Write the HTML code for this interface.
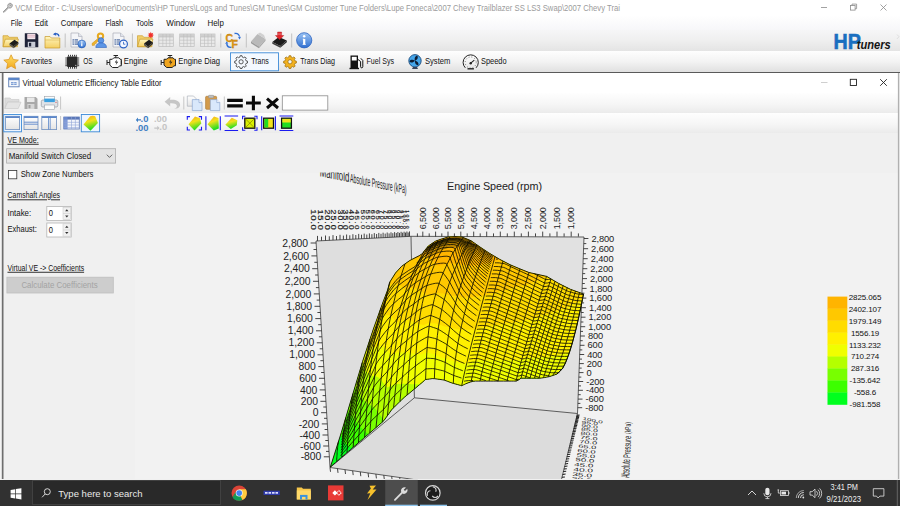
<!DOCTYPE html>
<html><head><meta charset="utf-8"><title>VCM Editor</title>
<style>
*{box-sizing:border-box;margin:0;padding:0}
html,body{width:900px;height:506px;overflow:hidden;background:#f0f0f0;font-family:"Liberation Sans",sans-serif;}
.abs{position:absolute}
#root{position:relative;width:900px;height:506px;overflow:hidden;background:#f0f0f0}
#titlebar{left:0;top:0;width:900px;height:15px;background:#fff}
#titlebar .t{left:15px;top:2px;font-size:8.3px;color:#9a9a9a;white-space:nowrap;letter-spacing:-0.08px}
#menubar{left:0;top:15px;width:900px;height:15px;background:linear-gradient(#ffffff,#f7f7f9)}
#menubar span{position:absolute;top:3px;font-size:8.4px;color:#111;white-space:nowrap}
#tb1{left:0;top:30px;width:900px;height:20.5px;background:linear-gradient(#f6f6f7,#efefef 50%,#e4e4e4)}
#tb2{left:0;top:50.5px;width:900px;height:21px;background:linear-gradient(#fefefe,#f3f3f3 50%,#e0e0e0)}
#tb2 span{position:absolute;top:6px;font-size:8.2px;color:#111;white-space:nowrap}
.sep{position:absolute;width:1px;background:#c3c3c3}
#mdiline{left:0;top:71.5px;width:900px;height:1.5px;background:#5a5a5a}
#child{left:0;top:73px;width:898px;height:407px;background:#f0f0f0;border-left:2px solid #f4f4f4}
#ctitle{left:0;top:0;width:896px;height:20px;background:#fff}

#ctb1{left:0;top:20px;width:896px;height:20px;background:linear-gradient(#fefefe,#f6f6f6 55%,#ebebeb)}
#ctb2{left:0;top:40px;width:896px;height:19.5px;background:linear-gradient(#fefefe,#f6f6f6 55%,#ebebeb)}
.lbl{position:absolute;font-size:7.9px;color:#111;white-space:nowrap}
.u{text-decoration:underline}
#taskbar{left:0;top:479.6px;width:900px;height:27px;background:#313131}
#search{left:32px;top:0.6px;width:189px;height:25px;background:#292929;border:0.7px solid #414141}
#search .t{left:26px;top:8px;font-size:9.6px;color:#e6e6e6;white-space:nowrap}
svg{position:absolute;overflow:visible}
</style></head><body>
<div id="root">
<!--TITLEBAR-->
<div id="titlebar" class="abs">
<svg style="left:2px;top:2px" width="11" height="11" viewBox="0 0 11 11"><path d="M1.2 9.8 L6 5 A2.6 2.6 0 0 1 9.2 1.4 L7.6 3 L8.4 3.8 L10 2.2 A2.6 2.6 0 0 1 6.6 5.8 L2 10.4 Z" fill="#d0d0d0" stroke="#7d7d7d" stroke-width="0.7"/></svg>

<svg style="left:815px;top:0" width="85" height="15" viewBox="0 0 85 15"><g stroke="#8a8a8a" stroke-width="0.8" fill="none"><path d="M6 7.5h6"/><rect x="35.5" y="5.5" width="4.6" height="4.6"/><path d="M37 5.5v-1.4h4.6v4.6h-1.5"/><path d="M65.500 4.500l6 6M71.500 4.500l-6 6"/></g></svg>
</div>
<!--MENUBAR-->
<div id="menubar" class="abs"></div>
<!--TB1-->
<div id="tb1" class="abs"><svg style="left:0;top:0" width="900" height="21" viewBox="0 30 900 21">
<defs>
<linearGradient id="gfold" x1="0" y1="0" x2="0" y2="1"><stop offset="0" stop-color="#fff6c0"/><stop offset="1" stop-color="#f4cf62"/></linearGradient>
<linearGradient id="ginfo" x1="0" y1="0" x2="0" y2="1"><stop offset="0" stop-color="#9cc4f4"/><stop offset="1" stop-color="#2f6fd0"/></linearGradient>
<g id="folder"><path d="M0.5 3.5h5l1.3 1.6h8.2v9.4h-14.5z" fill="#f0cf6a" stroke="#cfa236" stroke-width="0.7"/><path d="M0.5 14.5l2.3-7.5h13.2l-2.5 7.5z" fill="url(#gfold)" stroke="#c79a2b" stroke-width="0.7"/></g>
<g id="eraser"><path d="M0 4.2l5-3.7l4 2.6l-5 4.2z" fill="#1c1c1c"/><path d="M0 4.2l4 3.1v1.7l-4-3.1z" fill="#555"/><path d="M4 7.3l5-4.2v1.7l-5 4.2z" fill="#333"/></g>
<g id="doc"><path d="M1.5 0.5h7.5l3.5 3.5v10.5h-11z" fill="#f4f5f8" stroke="#a9adb8" stroke-width="0.7"/><path d="M9 0.5v3.5h3.5" fill="#dfe2ea" stroke="#a9adb8" stroke-width="0.6"/><rect x="3" y="6.5" width="5.5" height="6" fill="#7f93b8"/><path d="M3 8.5h5.5M3 10.5h5.5M5 6.5v6" stroke="#e8ecf4" stroke-width="0.6"/></g>
<g id="grid"><rect x="0.5" y="1.5" width="14.5" height="12.5" fill="#e9e9e9" stroke="#bdbdbd" stroke-width="0.7"/><rect x="0.5" y="1.5" width="14.5" height="3" fill="#cfcfcf"/><path d="M0.5 4.5h14.5M0.5 7.7h14.5M0.5 10.9h14.5M4.5 1.5v12.5M8 1.5v12.5M11.5 1.5v12.5" stroke="#bdbdbd" stroke-width="0.6" fill="none"/></g>
</defs>
<!-- separators -->
<g stroke="#c2c2c2" stroke-width="1"><path d="M65.2 33.5v14M132.4 33.5v14M220.8 33.5v14M246.3 33.5v14M291.7 33.5v14"/></g>
<!-- open folder + eraser -->
<use href="#folder" transform="translate(2.5 32.2)"/><use href="#eraser" transform="translate(9.5 39.3)"/>
<!-- floppy -->
<g transform="translate(24.8 33.2)"><path d="M0 0h11.8l1.7 1.7v12.3h-13.5z" fill="#1f2338"/><rect x="2.5" y="0.6" width="8" height="5.4" fill="#f3e9ee"/><rect x="2.5" y="1.6" width="8" height="0.8" fill="#d9a9b8"/><rect x="2.5" y="3.4" width="8" height="0.8" fill="#d9a9b8"/><rect x="3" y="8.6" width="7.5" height="5.4" fill="#c9ccd6"/><rect x="4.2" y="9.6" width="2.2" height="3.6" fill="#1f2338"/></g>
<!-- folder with up arrow -->
<g transform="translate(44.5 33.5)"><path d="M0.5 3h5l1.3 1.5h8.5v10h-14.8z" fill="url(#gfold)" stroke="#c79a2b" stroke-width="0.7"/><path d="M0.5 6.5h14.8" stroke="#d9b24a" stroke-width="0.6"/><path d="M14.5 2.8c-0.5-2.5-3-3-4.5-2.3" fill="none" stroke="#2d62c4" stroke-width="1.4"/><path d="M8.3 0.8l3-1.8l0.4 3.2z" fill="#2d62c4"/></g>
<!-- doc info -->
<use href="#doc" transform="translate(69.5 32.5)"/><circle cx="81.8" cy="44" r="3.9" fill="url(#ginfo)" stroke="#1f55b0" stroke-width="0.6"/><path d="M81.8 43.3v2.9" stroke="#fff" stroke-width="1.3"/><circle cx="81.8" cy="41.9" r="0.75" fill="#fff"/>
<!-- key + user -->
<g transform="translate(91 32.5)"><circle cx="9.5" cy="3.6" r="2.7" fill="none" stroke="#e8a91c" stroke-width="2"/><path d="M7.5 5.5l-6.5 5.5l0.3 2l2.2-0.3l0.2-1.6l1.6-0.2l0.2-1.6l1.5-0.3l2-1.8z" fill="#f0b429" stroke="#c98a10" stroke-width="0.5"/><circle cx="10" cy="8" r="2.8" fill="#5b95e6" stroke="#2c62bd" stroke-width="0.6"/><path d="M4.8 15c0-3.2 2.2-4.6 5.2-4.6s5.5 1.4 5.5 4.6z" fill="#5b95e6" stroke="#2c62bd" stroke-width="0.6"/></g>
<!-- doc clock -->
<use href="#doc" transform="translate(111.5 32.5)"/><circle cx="123.5" cy="44" r="3.9" fill="#f4f7ff" stroke="#2d62c4" stroke-width="1.2"/><path d="M123.5 41.8v2.4h1.8" stroke="#2d62c4" stroke-width="0.8" fill="none"/>
<!-- folder star eraser -->
<use href="#folder" transform="translate(137 32.2)"/><use href="#eraser" transform="translate(144 39.3)"/><path d="M150.8 31.8l0.7 1.6l1.7-0.7l-0.7 1.7l1.6 0.7l-1.6 0.7l0.7 1.7l-1.7-0.7l-0.7 1.6l-0.7-1.6l-1.7 0.7l0.7-1.7l-1.6-0.7l1.6-0.7l-0.7-1.7l1.7 0.7z" fill="#f0302a"/>
<!-- grids -->
<use href="#grid" transform="translate(158.3 32.5)"/><use href="#grid" transform="translate(179.2 32.5)"/><use href="#grid" transform="translate(200 32.5)"/>
<!-- CF -->
<g font-family="Liberation Sans, sans-serif" font-weight="700" fill="#e39a17" stroke="#b87608" stroke-width="0.3"><text x="225.5" y="41.5" font-size="10.5">C</text><text x="231.5" y="47.8" font-size="10.5">F</text></g>
<path d="M234.5 33.5c2.5-0.5 4.5 1 5 3.2" fill="none" stroke="#2f6fd6" stroke-width="1.3"/><path d="M238 37.3l1.7 2.3l1.3-2.8z" fill="#2f6fd6"/><path d="M231.5 47.2c-2.5 0.5-4.3-1-4.8-3.2" fill="none" stroke="#2f6fd6" stroke-width="1.3"/><path d="M228.3 43.5l-1.7-2.3l-1.3 2.8z" fill="#2f6fd6"/>
<!-- gray chip -->
<g transform="translate(251 33)"><path d="M0 8.5l6.5-7.5l8 5l-6.5 7.5z" fill="#b9b9b9"/><path d="M0 8.5l8 5v1.8l-8-5z" fill="#9a9a9a"/><path d="M8 13.5l6.5-7.5v1.8l-6.5 7.5z" fill="#a8a8a8"/><path d="M6.5 1l2.5-1.5l4 2.5l1.5 4z" fill="#d0d0d0"/></g>
<!-- black chip red arrow -->
<g transform="translate(272.3 33)"><path d="M0 9l6.5-5l8 3.5l-6.5 5.5z" fill="#1a1a1a"/><path d="M0 9l8 4v1.8l-8-4z" fill="#3c3c3c"/><path d="M8 13l6.5-5.5v1.8l-6.5 5.5z" fill="#2a2a2a"/><path d="M5.3 -1h4v3.5h2.2l-4.2 4.3l-4.2-4.3h2.2z" fill="#e0262b" stroke="#a51217" stroke-width="0.4"/><path d="M5.3 0.3h4M5.3 1.5h4" stroke="#f7a0a0" stroke-width="0.4"/></g>
<!-- info -->
<circle cx="304.2" cy="40.3" r="7.6" fill="url(#ginfo)" stroke="#2a62c0" stroke-width="0.8"/><path d="M304.2 39v5.2" stroke="#fff" stroke-width="2.2"/><circle cx="304.2" cy="36.2" r="1.25" fill="#fff"/><path d="M302.8 39.2h1.4M302.6 44.4h3.2" stroke="#fff" stroke-width="0.9"/>
<!-- HP tuners logo -->
<g font-family="Liberation Sans, sans-serif" font-weight="700"><text x="833.6" y="48.7" font-size="21.9" fill="#1a6fc0" stroke="#1a6fc0" stroke-width="0.6" textLength="27.3" lengthAdjust="spacingAndGlyphs">HP</text><text x="856.8" y="48.7" font-size="13.7" font-style="italic" fill="#141414" textLength="34" lengthAdjust="spacingAndGlyphs">tuners</text></g>
<path d="M897 34.5l2 2.2l-2 2.2" fill="none" stroke="#c9c9c9" stroke-width="0.5"/>
</svg>
</div>
<!--TB2-->
<div id="tb2" class="abs"><svg style="left:0;top:0" width="900" height="21" viewBox="0 50.5 900 21">
<defs><linearGradient id="gstar" x1="0" y1="0" x2="0" y2="1"><stop offset="0" stop-color="#ffe066"/><stop offset="1" stop-color="#f2a81d"/></linearGradient></defs>
<!-- star -->
<path d="M11.1 54.3l2.2 4.7l5.1 0.6l-3.8 3.5l1 5.1l-4.5-2.6l-4.5 2.6l1-5.1l-3.8-3.5l5.1-0.6z" fill="url(#gstar)" stroke="#d9901a" stroke-width="0.7" stroke-linejoin="round"/>
<!-- OS chip -->
<g><rect x="67" y="56" width="10.5" height="10.5" rx="1" fill="#2a2a2a"/><path d="M68.5 54.3v1.7M70.5 54.3v1.7M72.5 54.3v1.7M74.5 54.3v1.7M76.3 54.3v1.7M68.5 66.5v1.7M70.5 66.5v1.7M72.5 66.5v1.7M74.5 66.5v1.7M76.3 66.5v1.7M65.3 57.5h1.7M65.3 59.5h1.7M65.3 61.5h1.7M65.3 63.5h1.7M65.3 65.2h1.7M77.5 57.5h1.7M77.5 59.5h1.7M77.5 61.5h1.7M77.5 63.5h1.7M77.5 65.2h1.7" stroke="#2a2a2a" stroke-width="0.9"/><circle cx="75.8" cy="64.8" r="0.6" fill="#ddd"/></g>
<!-- engine outline -->
<g id="eng" fill="#fff" stroke="#222" stroke-width="1"><path d="M109.8 58.8h2.5l1.5-1.5h5l1.3 1.5h1.2v6.5h-1.7l-1.5 1.7h-5.6l-2.7-2.4z"/><path d="M113.5 55h4.5M115.8 55v2.3M107 59.5v5M107 62h2.8M121.3 60v4" fill="none"/><path d="M116.8 59l-2 3h1.8l-1 2.8l2.6-3.6h-1.8z" fill="#222" stroke="none"/></g>
<!-- engine diag (amber) -->
<g fill="#f0a51e" stroke="#222" stroke-width="1"><path d="M164 58.8h2.5l1.5-1.5h5l1.3 1.5h1.2v6.5h-1.7l-1.5 1.7h-5.6l-2.7-2.4z"/><path d="M167.7 55h4.5M170 55v2.3M161.2 59.5v5M161.2 62h2.8M175.5 60v4" fill="none"/><path d="M171 59l-2 3h1.8l-1 2.8l2.6-3.6h-1.8z" fill="#222" stroke="none"/></g>
<!-- Trans selected box -->
<rect x="230.5" y="52.3" width="48" height="18" fill="#f4f9ff" stroke="#3c8ad8" stroke-width="0.9"/>
<!-- gear outline -->
<g id="gearo" fill="none" stroke="#333" stroke-width="0.8"><circle cx="241.1" cy="61.3" r="2.1"/><path d="M240.2 55.2h1.8l0.4 1.5l1.3 0.5l1.3-0.8l1.3 1.3l-0.8 1.3l0.5 1.3l1.5 0.4v1.8l-1.5 0.4l-0.5 1.3l0.8 1.3l-1.3 1.3l-1.3-0.8l-1.3 0.5l-0.4 1.5h-1.8l-0.4-1.5l-1.3-0.5l-1.3 0.8l-1.3-1.3l0.8-1.3l-0.5-1.3l-1.5-0.4v-1.8l1.5-0.4l0.5-1.3l-0.8-1.3l1.3-1.3l1.3 0.8l1.3-0.5z"/></g>
<!-- gold gear -->
<g transform="translate(48.9 0)" fill="#f2b11f" stroke="#9a6a08" stroke-width="0.7" fill-rule="evenodd"><path d="M240.2 55.2h1.8l0.4 1.5l1.3 0.5l1.3-0.8l1.3 1.3l-0.8 1.3l0.5 1.3l1.5 0.4v1.8l-1.5 0.4l-0.5 1.3l0.8 1.3l-1.3 1.3l-1.3-0.8l-1.3 0.5l-0.4 1.5h-1.8l-0.4-1.5l-1.3-0.5l-1.3 0.8l-1.3-1.3l0.8-1.3l-0.5-1.3l-1.5-0.4v-1.8l1.5-0.4l0.5-1.3l-0.8-1.3l1.3-1.3l1.3 0.8l1.3-0.5z M243.2 61.3a2.1 2.1 0 1 0 -4.2 0a2.1 2.1 0 1 0 4.2 0z"/></g>
<!-- fuel pump -->
<g><path d="M350.5 55h7.5v12.5h-7.5z" fill="#111"/><rect x="351.8" y="56.3" width="4.9" height="3.7" fill="#fff"/><path d="M349.5 68h9.5" stroke="#111" stroke-width="1.4"/><path d="M358 59l2.6 2v5.2a1.1 1.1 0 0 0 2.2 0v-6.2l-2-2.2" fill="none" stroke="#111" stroke-width="1"/></g>
<!-- system fan -->
<g><circle cx="415" cy="60.3" r="6.2" fill="#45a6ea" stroke="#1f4c7a" stroke-width="0.9"/><path d="M415 60.3c-1-3 0.5-5 2.5-5c0.8 2 0 4-2.5 5zM415 60.3c3.1 0.6 4.1 2.9 3.1 4.6c-2.1-0.3-3.4-2-3.1-4.6zM415 60.3c-2.1 2.4-4.6 2.1-5.6 0.4c1.3-1.7 3.4-2 5.6-0.4z" fill="#0f1d33"/><path d="M412 68.6h6l-1-2h-4z" fill="#39455c"/></g>
<!-- speedo -->
<g fill="none" stroke="#222" stroke-width="1"><path d="M465.300 67.300a7.600 7.600 0 1 1 10.800 0"/><path d="M467.500 68.300h6.400" stroke-width="1.400"/><path d="M470.700 62.600l3.600-3" stroke-width="1.100"/><circle cx="470.700" cy="62" r="5.500" stroke-width="1" stroke-dasharray="0.700 2.200" opacity="0.750"/></g><circle cx="470.700" cy="62.700" r="1.200" fill="#222"/>
</svg>
</div>
<div id="mdiline" class="abs"></div>
<!--CHILD-->
<div id="child" class="abs">
<div id="ctitle" class="abs"></div>
<div id="ctb1" class="abs"></div>
<div id="ctb2" class="abs"></div>
</div>
<svg style="left:0;top:0" width="900" height="140" viewBox="0 0 900 140">
<defs>
<linearGradient id="gsurf" x1="0" y1="0" x2="0.3" y2="1"><stop offset="0" stop-color="#f6a21a"/><stop offset="0.45" stop-color="#f2e21c"/><stop offset="1" stop-color="#22dd22"/></linearGradient>
<linearGradient id="gpaper" x1="0" y1="0" x2="0" y2="1"><stop offset="0" stop-color="#ffffff"/><stop offset="1" stop-color="#e4e4e4"/></linearGradient>
</defs>
<rect x="135" y="173" width="763" height="306" fill="#f2f2f2"/><rect x="898" y="73" width="2" height="406" fill="#e4e4e4"/><path d="M898.4 73v406" stroke="#9c9c9c" stroke-width="0.8"/>
<!-- child left dark border -->
<rect x="1.8" y="73" width="1.7" height="406" fill="#6e6e6e"/>
<!-- title icon -->
<g><rect x="8.7" y="78" width="10.4" height="8.8" fill="#f4f7fc" stroke="#5f7fb5" stroke-width="0.9"/><rect x="8.7" y="78" width="10.4" height="2.2" fill="#5b86c9"/><rect x="11" y="82" width="5.6" height="3" fill="#7fa0d6"/><path d="M11 83.5h5.6M13.8 82v3" stroke="#fff" stroke-width="0.5"/></g>
<!-- child window buttons -->
<g fill="none"><path d="M821 82.5h6.5" stroke="#c9c9c9" stroke-width="0.9"/><rect x="850.3" y="79.3" width="6.2" height="6.2" stroke="#222" stroke-width="0.9"/><path d="M880.2 79.2l6.6 6.6M886.8 79.2l-6.6 6.6" stroke="#222" stroke-width="0.9"/></g>
<!-- row 1 -->
<g opacity="0.9"><path d="M4.9 98h5.2l1.3 1.5h7.6v2.5h-11.5l-2.6 6.5z" fill="#dadada" stroke="#c3c3c3" stroke-width="0.6"/><path d="M4.9 108.5l2.8-6.3h13.3l-2.8 6.3z" fill="#e3e3e3" stroke="#c3c3c3" stroke-width="0.6"/></g>
<g><path d="M24.5 97h11.2l1.8 1.8v10.2h-13z" fill="#a9a9a9"/><rect x="27" y="97.5" width="7.5" height="4.5" fill="#e9e9e9"/><rect x="27.4" y="104" width="7" height="5" fill="#d6d6d6"/><rect x="28.5" y="105" width="2" height="3.3" fill="#a0a0a0"/></g>
<g><rect x="44.5" y="96.5" width="10" height="4.5" fill="#fbfbfb" stroke="#9aa0a8" stroke-width="0.6"/><rect x="41.3" y="100" width="16.5" height="7" rx="1.5" fill="#dfe3e8" stroke="#8f979f" stroke-width="0.7"/><rect x="44.3" y="98.6" width="10.5" height="3.5" fill="#3aa0e0"/><rect x="44.5" y="105" width="10" height="4.5" fill="#fdfdfd" stroke="#9aa0a8" stroke-width="0.6"/><circle cx="56" cy="102.2" r="0.55" fill="#d83030"/></g>
<path d="M60.6 96.5v13M183.8 96.5v13M224.3 96.5v13" stroke="#c6c6c6" stroke-width="1"/>
<!-- undo -->
<path d="M164.6 101.8l5.6-4.8v2.9c5.2-0.6 9.6 1.2 9.9 4.6c0.2 2.600-2.400 4.300-5.900 4.500c2.200-1 3-2.400 2.600-3.600c-0.500-1.600-3.100-2.400-6.600-2.200v3.400z" fill="#c6c6c6"/>
<!-- copy -->
<g stroke="#a3a9b3" stroke-width="0.6"><path d="M187.3 96h6.2l2.5 2.5v7.7h-8.7z" fill="url(#gpaper)"/><path d="M192.3 99.6h6.7l3 3v8h-9.7z" fill="#d9e8fb" stroke="#7f9cc9"/><path d="M199 99.6v3h3" fill="#f4f8ff" stroke="#7f9cc9"/></g>
<!-- paste -->
<g><rect x="205.6" y="96.3" width="11" height="13" rx="1" fill="#d39b4c" stroke="#a8742b" stroke-width="0.6"/><rect x="208.5" y="95.3" width="5.2" height="2.6" rx="0.7" fill="#bfbfbf" stroke="#8a8a8a" stroke-width="0.5"/><path d="M210.3 99.6h6.5l3 3v8h-9.5z" fill="#d9e8fb" stroke="#7f9cc9" stroke-width="0.6"/><path d="M216.8 99.6v3h3" fill="#f4f8ff" stroke="#7f9cc9" stroke-width="0.6"/></g>
<!-- = + x -->
<g stroke="#0a0a0a" fill="none"><path d="M227.2 100.3h15.6M227.2 105.8h15.6" stroke-width="3.2"/><path d="M246 103h14.8M253.4 95.8v14.4" stroke-width="3.1"/><path d="M267 98.6l11 9.4M278 98.6l-11 9.4" stroke-width="3"/></g>
<rect x="282.3" y="95.8" width="45.5" height="14.3" fill="#fff" stroke="#8c8c8c" stroke-width="0.8"/>
<!-- row 2 : layout icons -->
<rect x="3.7" y="114.5" width="17.8" height="17.3" fill="#eef6ff" stroke="#3c8ad8" stroke-width="0.9"/>
<g fill="url(#gpaper)" stroke="#6f8fbf" stroke-width="0.8"><rect x="5.6" y="116.3" width="14" height="13.3"/><rect x="24" y="116.3" width="14" height="13.3"/><rect x="41.8" y="116.3" width="14.8" height="13.3"/></g>
<g stroke="#5b86c9" fill="none"><path d="M5.6 117.2h14M24 117.2h14M41.8 117.2h14.8" stroke-width="1.8"/><path d="M24 122.2h14M24 124.2h14" stroke-width="0.9"/><path d="M48.5 116.3v13.3M50.2 116.3v13.3" stroke-width="0.8"/></g>
<path d="M60.6 116v14" stroke="#c6c6c6" stroke-width="1"/>
<!-- table icon -->
<g><rect x="63.8" y="117" width="15.5" height="12" fill="#f4f6fb" stroke="#5b78b8" stroke-width="0.8"/><rect x="63.8" y="117" width="15.5" height="2.6" fill="#5b78b8"/><rect x="63.8" y="117" width="3.8" height="12" fill="#6c8bd0" opacity="0.85"/><path d="M63.8 122.3h15.5M63.8 125h15.5M63.8 127.6h15.5M71.5 117v12M75.4 117v12" stroke="#8ea4d6" stroke-width="0.6"/></g>
<!-- surface icon selected -->
<rect x="81.3" y="114.5" width="18.3" height="17.3" fill="#eef6ff" stroke="#3c8ad8" stroke-width="0.9"/>
<path d="M83.5 124.5l6.7-8.2c1.5-0.9 4-0.7 5 0l2.7 6.6l-7.4 7.8z" fill="url(#gsurf)"/>
<!-- decimal icons -->
<g font-family="Liberation Sans, sans-serif" font-weight="700" font-size="9.4"><text x="140.6" y="122.3" fill="#3f7fc4">.0</text><text x="135.4" y="130.8" fill="#3f7fc4">.00</text><text x="154" y="122" fill="#c4c4c4">.00</text><text x="159.3" y="130.3" fill="#c4c4c4">.0</text></g>
<path d="M141 119.2h-3v-1.6l-2.2 2.3l2.2 2.3v-1.6h3z" fill="#3f7fc4"/><path d="M154.3 127.4h3v-1.6l2.2 2.3l-2.2 2.3v-1.6h-3z" fill="#c4c4c4"/>
<!-- view icons -->
<g id="vi">
<path d="M188.5 124.3l6.5-7.8l5 1.8l1.3 5.3l-6.8 7z" fill="url(#gsurf)"/><path d="M187.3 119.8v-3.2h2.7M198.8 116.6h2.7v3.2M201.5 126.8v3.2h-2.7M190 130h-2.7v-3.2" fill="none" stroke="#1a1af0" stroke-width="1.1"/>
<path d="M207.5 124.3l6.5-7.8l4.5 1.6l0.3 10.5l-5 2z" fill="url(#gsurf)"/><path d="M205.9 116.3v14M220.3 116.3v14" stroke="#1a1af0" stroke-width="1.1"/>
<path d="M225.3 124.8l6.5-7l5.5 2.5l-0.5 5l-6 3.8z" fill="url(#gsurf)"/><path d="M224.6 116h13.5M224.6 130.5h13.5" stroke="#1a1af0" stroke-width="1.1"/>
<rect x="244.8" y="118.2" width="10" height="10" fill="#d8f000" stroke="#111" stroke-width="1.3"/><path d="M244.8 118.2l10 10M254.8 118.2l-10 10" stroke="#7a6a00" stroke-width="0.6"/><path d="M242.6 119.3v-3h2.7M254.3 116.3h2.7v3M257 127.3v3h-2.7M245.3 130.3h-2.7v-3" fill="none" stroke="#1a1af0" stroke-width="1.1"/>
<rect x="263.7" y="118.2" width="9.8" height="10" fill="#f2e21c" stroke="#111" stroke-width="1.3"/><rect x="264.4" y="118.9" width="3.8" height="8.6" fill="#22dd22"/><path d="M261.7 116.3v14M275.4 116.3v14" stroke="#1a1af0" stroke-width="1.1"/>
<rect x="281.6" y="118.2" width="9.8" height="10" fill="#22dd22" stroke="#111" stroke-width="1.3"/><rect x="282.3" y="118.9" width="8.4" height="3.6" fill="#f2e21c"/><path d="M279.5 116h13.8M279.5 130.5h13.8" stroke="#1a1af0" stroke-width="1.1"/>
</g>
</svg>

<svg style="left:0;top:0" width="262" height="479" viewBox="0 0 262 479">
<rect x="6.6" y="148.7" width="109" height="14.4" fill="#e3e3e3" stroke="#adadad" stroke-width="0.8"/>
<path d="M106.8 154.7l2.7 2.7l2.7-2.7" fill="none" stroke="#444" stroke-width="0.8"/>
<rect x="8.5" y="170.5" width="8.3" height="8.3" fill="#fff" stroke="#333" stroke-width="0.8"/>
<g><rect x="46.8" y="206.5" width="24.4" height="14" fill="#fff" stroke="#b5b5b5" stroke-width="0.8"/><rect x="63" y="207.3" width="7.6" height="12.4" fill="#f0f0f0" stroke="#c8c8c8" stroke-width="0.5"/><path d="M65.1 211.3l1.7-2l1.7 2zM65.1 215.6l1.7 2l1.7-2z" fill="#333"/><path d="M63 213.5h7.6" stroke="#c8c8c8" stroke-width="0.5"/></g>
<g transform="translate(0 16.5)"><rect x="46.8" y="206.5" width="24.4" height="14" fill="#fff" stroke="#b5b5b5" stroke-width="0.8"/><rect x="63" y="207.3" width="7.6" height="12.4" fill="#f0f0f0" stroke="#c8c8c8" stroke-width="0.5"/><path d="M65.1 211.3l1.7-2l1.7 2zM65.1 215.6l1.7 2l1.7-2z" fill="#333"/><path d="M63 213.5h7.6" stroke="#c8c8c8" stroke-width="0.5"/></g>
<rect x="6.9" y="277.2" width="106.4" height="15.8" fill="#cdcdcd" stroke="#bfbfbf" stroke-width="0.8"/>
</svg>

<svg style="left:0;top:0" width="900" height="479" viewBox="0 0 900 479"><g font-family="Liberation Sans, sans-serif">
<text x="15.2" y="10.8" font-size="8.6" fill="#9b9b9b" textLength="604.8" lengthAdjust="spacingAndGlyphs" >VCM Editor - C:\Users\owner\Documents\HP Tuners\Logs and Tunes\GM Tunes\GM Customer Tune Folders\Lupe Foneca\2007 Chevy Trailblazer SS LS3 Swap\2007 Chevy Trai</text>
<text x="10.7" y="26.4" font-size="8.9" fill="#111" textLength="11.5" lengthAdjust="spacingAndGlyphs" >File</text>
<text x="34.7" y="26.4" font-size="8.9" fill="#111" textLength="13.3" lengthAdjust="spacingAndGlyphs" >Edit</text>
<text x="60.8" y="26.4" font-size="8.9" fill="#111" textLength="32.0" lengthAdjust="spacingAndGlyphs" >Compare</text>
<text x="105.4" y="26.4" font-size="8.9" fill="#111" textLength="17.6" lengthAdjust="spacingAndGlyphs" >Flash</text>
<text x="136" y="26.4" font-size="8.9" fill="#111" textLength="17.2" lengthAdjust="spacingAndGlyphs" >Tools</text>
<text x="166.3" y="26.4" font-size="8.9" fill="#111" textLength="28.7" lengthAdjust="spacingAndGlyphs" >Window</text>
<text x="207.5" y="26.4" font-size="8.9" fill="#111" textLength="16.3" lengthAdjust="spacingAndGlyphs" >Help</text>
<text x="21.3" y="64.2" font-size="8.7" fill="#111" textLength="30.7" lengthAdjust="spacingAndGlyphs" >Favorites</text>
<text x="83.2" y="64.2" font-size="8.7" fill="#111" textLength="9.4" lengthAdjust="spacingAndGlyphs" >OS</text>
<text x="123.8" y="64.2" font-size="8.7" fill="#111" textLength="23.8" lengthAdjust="spacingAndGlyphs" >Engine</text>
<text x="178.3" y="64.2" font-size="8.7" fill="#111" textLength="41.6" lengthAdjust="spacingAndGlyphs" >Engine Diag</text>
<text x="251.2" y="64.2" font-size="8.7" fill="#111" textLength="17.6" lengthAdjust="spacingAndGlyphs" >Trans</text>
<text x="300.2" y="64.2" font-size="8.7" fill="#111" textLength="34.8" lengthAdjust="spacingAndGlyphs" >Trans Diag</text>
<text x="366.5" y="64.2" font-size="8.7" fill="#111" textLength="27.5" lengthAdjust="spacingAndGlyphs" >Fuel Sys</text>
<text x="425" y="64.2" font-size="8.7" fill="#111" textLength="25.3" lengthAdjust="spacingAndGlyphs" >System</text>
<text x="481" y="64.2" font-size="8.7" fill="#111" textLength="25.5" lengthAdjust="spacingAndGlyphs" >Speedo</text>
<text x="22.4" y="85.8" font-size="8.7" fill="#111" textLength="139.2" lengthAdjust="spacingAndGlyphs" >Virtual Volumetric Efficiency Table Editor</text>
<text x="7.5" y="142.8" font-size="8.6" fill="#111" textLength="31.2" lengthAdjust="spacingAndGlyphs" text-decoration="underline">VE Mode:</text>
<text x="8.7" y="158.8" font-size="8.6" fill="#111" textLength="82.5" lengthAdjust="spacingAndGlyphs" >Manifold Switch Closed</text>
<text x="20.7" y="177.4" font-size="8.6" fill="#111" textLength="72.8" lengthAdjust="spacingAndGlyphs" >Show Zone Numbers</text>
<text x="7.5" y="198.4" font-size="8.6" fill="#111" textLength="52.5" lengthAdjust="spacingAndGlyphs" text-decoration="underline">Camshaft Angles</text>
<text x="7.5" y="215.8" font-size="8.6" fill="#111" textLength="23.7" lengthAdjust="spacingAndGlyphs" >Intake:</text>
<text x="7.5" y="232.3" font-size="8.6" fill="#111" textLength="29.3" lengthAdjust="spacingAndGlyphs" >Exhaust:</text>
<text x="48.8" y="216.1" font-size="8.6" fill="#111" textLength="4.2" lengthAdjust="spacingAndGlyphs" >0</text>
<text x="48.8" y="232.6" font-size="8.6" fill="#111" textLength="4.2" lengthAdjust="spacingAndGlyphs" >0</text>
<text x="7.5" y="270.8" font-size="8.6" fill="#111" textLength="76.6" lengthAdjust="spacingAndGlyphs" text-decoration="underline">Virtual VE -&gt; Coefficients</text>
<text x="21.4" y="288.0" font-size="8.6" fill="#a3a3a3" textLength="76.2" lengthAdjust="spacingAndGlyphs" >Calculate Coefficients</text>
</g></svg>
<svg style="left:0;top:0" width="900" height="506" viewBox="0 0 900 506">
<defs><clipPath id="cpp"><rect x="262" y="133" width="636" height="346"/></clipPath></defs>
<g clip-path="url(#cpp)">
<polygon points="316,241 411,236.3 414.4,397.8 330,467.5" fill="#dedede"/>
<polygon points="411,236.3 584,237 577.5,413.5 414.4,397.8" fill="#e1e1e1"/>
<polygon points="330,467.5 414.4,397.8 577.5,413.5 556.5,500" fill="#dcdcdc"/>
<g fill="none" stroke="#3a3a3a" stroke-width="0.8">
<polyline points="316,241 411,236.3 584,237"/>
<polyline points="316,241 330,467.5"/>
<polyline points="411,236.3 414.4,397.8"/>
<polyline points="584,237 577.5,413.5"/>
<polyline points="330,467.5 414.4,397.8 577.5,413.5"/>
<polyline points="330,467.5 556.5,500 577.5,413.5"/>
</g>
<polygon points="330.4,467 332.9,464.8 335.5,462.6 336.6,461.6 338,460.4 340.6,458.2 341.8,457.1 343.1,456 345.7,453.8 347,452.6 348.2,451.6 350.8,449.4 353.2,447.3 353.3,447.2 355.9,445 358.4,442.8 358.4,442.8 361,440.6 363.5,438.4 364.6,437.4 366,436.2 368.6,434 369.8,432.9 371.1,431.8 373.7,429.6 376,427.6 376.2,427.4 378.8,425.2 381.3,423 382.2,422.2 383.9,420.6 386.4,417.1 387.4,415.7 389,413.5 391.5,409.9 393.6,407.7 394.1,407.3 396.6,404.8 399.1,402.3 399.9,401.5 401.7,399.8 404.2,397.4 406.8,395.3 407.1,395 409.3,393.2 411.9,391.1 414.4,389 414.4,389 417,386.8 419.5,384.7 422.1,382.5 424.6,380.3 425.6,379.5 427.2,379.3 429.7,379 432.2,378.6 434.4,378.7 434.8,378.7 437.3,379.1 439.9,379.4 442.4,379.8 444.3,380.1 445,380.4 447.5,381.3 450.1,382.3 452.6,383.2 453.3,383.4 455.2,383.9 457.7,384.6 460.2,385.3 460.4,385.3 461.7,385.7 462.8,385.2 463.4,384.9 464.5,384.4 465.3,384 467.9,382.9 470.4,382.1 471,381.9 473,381.3 475.5,381.1 478.1,381.1 480,381.1 480.6,381.1 483.2,381.1 485.7,381.1 488.3,381.1 489,381.1 490.8,381.1 493.3,381.1 495.9,381.1 498,381.1 498.4,381.1 501,381.1 503.5,381.1 506.1,381.1 507,381.1 508.6,381.1 511.2,381.1 513.7,381.1 516,381.1 516.3,381.1 518.8,379.8 521,378.2 521.4,378.2 523.9,378.2 525.5,378.2 526.4,378.2 529,378.2 530,378.2 531.5,378.2 534.1,378.2 534.5,378.2 536.6,378.2 539,378.2 539.2,378.2 541.7,378 543.5,377.7 544.3,377.6 546.8,377.1 548,376.9 549.4,376.6 551.9,375.8 552.5,375.6 554.5,374.9 557,374 557,374 563.6,366.7 566.9,359.5 569.5,352.2 571.7,344.9 573.8,337.6 575.6,330.4 577.4,323.1 579,315.8 580.6,308.5 582.1,301.3 583.5,294 583.5,294 570.4,289.3 558.6,283.4 546.7,276.4 529,272.5 519,268.5 510,264.7 499.6,259.3 489,253 480,247 471,240.7 462,237 455,236.5 448,237 440,239.5 435.8,241 428.7,245.7 425,250 422.5,253.5 419.2,255.7 409.8,260.5 401.5,266.4 395.5,273 389.6,282.4 387.6,290 382.3,304 373.4,329 362.7,361.2 352,396.8 341.4,432.3 330.7,466" fill="#00ff1e"/>
<polygon points="330.4,467 333.9,455.9 337.1,445.8 338.5,441.4 340.5,435.1 342,438.6 342.9,440.9 344,442.6 346.2,444.7 347.4,445.5 348.5,446.3 350.9,447.7 353.2,447.3 353.3,447.2 355.9,445 358.4,442.8 358.4,442.8 361,440.6 363.5,438.4 364.6,437.4 366,436.2 368.6,434 369.8,432.9 371.1,431.8 373.7,429.6 376,427.6 376.2,427.4 378.8,425.2 381.3,423 382.2,422.2 383.9,420.6 386.4,417.1 387.4,415.7 389,413.5 391.5,409.9 393.6,407.7 394.1,407.3 396.6,404.8 399.1,402.3 399.9,401.5 401.7,399.8 404.2,397.4 406.8,395.3 407.1,395 409.3,393.2 411.9,391.1 414.4,389 414.4,389 417,386.8 419.5,384.7 422.1,382.5 424.6,380.3 425.6,379.5 427.2,379.3 429.7,379 432.2,378.6 434.4,378.7 434.8,378.7 437.3,379.1 439.9,379.4 442.4,379.8 444.3,380.1 445,380.4 447.5,381.3 450.1,382.3 452.6,383.2 453.3,383.4 455.2,383.9 457.7,384.6 460.2,385.3 460.4,385.3 461.7,385.7 462.8,385.2 463.4,384.9 464.5,384.4 465.3,384 467.9,382.9 470.4,382.1 471,381.9 473,381.3 475.5,381.1 478.1,381.1 480,381.1 480.6,381.1 483.2,381.1 485.7,381.1 488.3,381.1 489,381.1 490.8,381.1 493.3,381.1 495.9,381.1 498,381.1 498.4,381.1 501,381.1 503.5,381.1 506.1,381.1 507,381.1 508.6,381.1 511.2,381.1 513.7,381.1 516,381.1 516.3,381.1 518.8,379.8 521,378.2 521.4,378.2 523.9,378.2 525.5,378.2 526.4,378.2 529,378.2 530,378.2 531.5,378.2 534.1,378.2 534.5,378.2 536.6,378.2 539,378.2 539.2,378.2 541.7,378 543.5,377.7 544.3,377.6 546.8,377.1 548,376.9 549.4,376.6 551.9,375.8 552.5,375.6 554.5,374.9 557,374 557,374 563.6,366.7 566.9,359.5 569.5,352.2 571.7,344.9 573.8,337.6 575.6,330.4 577.4,323.1 579,315.8 580.6,308.5 582.1,301.3 583.5,294 583.5,294 570.4,289.3 558.6,283.4 546.7,276.4 529,272.5 519,268.5 510,264.7 499.6,259.3 489,253 480,247 471,240.7 462,237 455,236.5 448,237 440,239.5 435.8,241 428.7,245.7 425,250 422.5,253.5 419.2,255.7 409.8,260.5 401.5,266.4 395.5,273 389.6,282.4 387.6,290 382.3,304 373.4,329 362.7,361.2 352,396.8 341.4,432.3 330.7,466" fill="#3cff00"/>
<polygon points="330.4,467 333.9,455.9 337.1,445.8 338.5,441.4 340.5,435.1 344.1,423.4 345.8,417.7 347.6,411.5 349,413 349.9,414.3 350.8,415.5 352.9,417.9 355,420.2 355.1,420.3 357.3,423.2 359.6,425.8 359.6,425.9 361.8,428.3 364.1,430.5 365.1,431.4 366.3,432.7 368.6,434 369.8,432.9 371.1,431.8 373.7,429.6 376,427.6 376.2,427.4 378.8,425.2 381.3,423 382.2,422.2 383.9,420.6 386.4,417.1 387.4,415.7 389,413.5 391.5,409.9 393.6,407.7 394.1,407.3 396.6,404.8 399.1,402.3 399.9,401.5 401.7,399.8 404.2,397.4 406.8,395.3 407.1,395 409.3,393.2 411.9,391.1 414.4,389 414.4,389 417,386.8 419.5,384.7 422.1,382.5 424.6,380.3 425.6,379.5 427.2,379.3 429.7,379 432.2,378.6 434.4,378.7 434.8,378.7 437.3,379.1 439.9,379.4 442.4,379.8 444.3,380.1 445,380.4 447.5,381.3 450.1,382.3 452.6,383.2 453.3,383.4 455.2,383.9 457.7,384.6 460.2,385.3 460.4,385.3 461.7,385.7 462.8,385.2 463.4,384.9 464.5,384.4 465.3,384 467.9,382.9 470.4,382.1 471,381.9 473,381.3 475.5,381.1 478.1,381.1 480,381.1 480.6,381.1 483.2,381.1 485.7,381.1 488.3,381.1 489,381.1 490.8,381.1 493.3,381.1 495.9,381.1 498,381.1 498.4,381.1 501,381.1 503.5,381.1 506.1,381.1 507,381.1 508.6,381.1 511.2,381.1 513.7,381.1 516,381.1 516.3,381.1 518.8,379.8 521,378.2 521.4,378.2 523.9,378.2 525.5,378.2 526.4,378.2 529,378.2 530,378.2 531.5,378.2 534.1,378.2 534.5,378.2 536.6,378.2 539,378.2 539.2,378.2 541.7,378 543.5,377.7 544.3,377.6 546.8,377.1 548,376.9 549.4,376.6 551.9,375.8 552.5,375.6 554.5,374.9 557,374 557,374 563.6,366.7 566.9,359.5 569.5,352.2 571.7,344.9 573.8,337.6 575.6,330.4 577.4,323.1 579,315.8 580.6,308.5 582.1,301.3 583.5,294 583.5,294 570.4,289.3 558.6,283.4 546.7,276.4 529,272.5 519,268.5 510,264.7 499.6,259.3 489,253 480,247 471,240.7 462,237 455,236.5 448,237 440,239.5 435.8,241 428.7,245.7 425,250 422.5,253.5 419.2,255.7 409.8,260.5 401.5,266.4 395.5,273 389.6,282.4 387.6,290 382.3,304 373.4,329 362.7,361.2 352,396.8 341.4,432.3 330.7,466" fill="#78ff00"/>
<polygon points="330.4,467 333.9,455.9 337.1,445.8 338.5,441.4 340.5,435.1 344.1,423.4 345.8,417.7 347.6,411.5 351.2,399.6 353,393.5 354.8,387.4 356.3,388.1 357.8,390.9 357.8,391.1 359.7,394.5 361.7,397.6 361.7,397.6 364,400.4 366.3,402.6 367.3,403.3 368.6,404.3 370.9,405.6 372,405.9 373.3,407.1 375.6,409.3 377.6,411.6 377.8,411.9 379.8,414.7 381.9,417.6 382.6,418.6 383.9,420.4 386.4,417.1 387.4,415.7 389,413.5 391.5,409.9 393.6,407.7 394.1,407.3 396.6,404.8 399.1,402.3 399.9,401.5 401.7,399.8 404.2,397.4 406.8,395.3 407.1,395 409.3,393.2 411.9,391.1 414.4,389 414.4,389 417,386.8 419.5,384.7 422.1,382.5 424.6,380.3 425.6,379.5 427.2,379.3 429.7,379 432.2,378.6 434.4,378.7 434.8,378.7 437.3,379.1 439.9,379.4 442.4,379.8 444.3,380.1 445,380.4 447.5,381.3 450.1,382.3 452.6,383.2 453.3,383.4 455.2,383.9 457.7,384.6 460.2,385.3 460.4,385.3 461.7,385.7 462.8,385.2 463.4,384.9 464.5,384.4 465.3,384 467.9,382.9 470.4,382.1 471,381.9 473,381.3 475.5,381.1 478.1,381.1 480,381.1 480.6,381.1 483.2,381.1 485.7,381.1 488.3,381.1 489,381.1 490.8,381.1 493.3,381.1 495.9,381.1 498,381.1 498.4,381.1 501,381.1 503.5,381.1 506.1,381.1 507,381.1 508.6,381.1 511.2,381.1 513.7,381.1 516,381.1 516.3,381.1 518.8,379.8 521,378.2 521.4,378.2 523.9,378.2 525.5,378.2 526.4,378.2 529,378.2 530,378.2 531.5,378.2 534.1,378.2 534.5,378.2 536.6,378.2 539,378.2 539.2,378.2 541.7,378 543.5,377.7 544.3,377.6 546.8,377.1 548,376.9 549.4,376.6 551.9,375.8 552.5,375.6 554.5,374.9 557,374 557,374 563.6,366.7 566.9,359.5 569.5,352.2 571.7,344.9 573.8,337.6 575.6,330.4 577.4,323.1 579,315.8 580.6,308.5 582.1,301.3 583.5,294 583.5,294 570.4,289.3 558.6,283.4 546.7,276.4 529,272.5 519,268.5 510,264.7 499.6,259.3 489,253 480,247 471,240.7 462,237 455,236.5 448,237 440,239.5 435.8,241 428.7,245.7 425,250 422.5,253.5 419.2,255.7 409.8,260.5 401.5,266.4 395.5,273 389.6,282.4 387.6,290 382.3,304 373.4,329 362.7,361.2 352,396.8 341.4,432.3 330.7,466" fill="#b4ff00"/>
<polygon points="330.4,467 333.9,455.9 337.1,445.8 338.5,441.4 340.5,435.1 344.1,423.4 345.8,417.7 347.6,411.5 351.2,399.6 353,393.5 354.8,387.4 358.6,374.8 362.2,362.7 362.4,362.1 363.4,365.8 364.8,369.4 364.8,369.4 366.8,372.4 368.9,374.7 369.9,375.2 371.2,376 373.6,376.1 374.7,375.5 376.2,376.5 378.9,377.8 381,379.8 381.2,380 383.2,382.7 385.2,385.6 385.9,386.2 387.3,387.6 389.5,386.6 390.4,386.1 391.8,385.5 394.1,384.5 396,384.2 396.4,384.2 398.7,384.1 401,383.9 401.7,383.9 403.2,383.8 405.4,383.7 407.6,383.9 407.9,383.9 409.9,384 412.2,384.2 414.6,384.3 414.6,384.3 417.1,384.3 419.5,384.3 422.1,382.5 424.6,380.3 425.6,379.5 427.2,379.3 429.7,379 432.2,378.6 434.4,378.7 434.8,378.7 437.3,379.1 439.9,379.4 442.4,379.8 444.3,380.1 445,380.4 447.5,381.3 450.1,382.3 452.6,383.2 453.3,383.4 455.2,383.9 457.7,384.6 460.2,385.3 460.4,385.3 461.7,385.7 462.8,385.2 463.4,384.9 464.5,384.4 465.3,384 467.9,382.9 470.4,382.1 471,381.9 473,381.3 475.5,381.1 478.1,381.1 480,381.1 480.6,381.1 483.2,381.1 485.7,381.1 488.3,381.1 489,381.1 490.8,381.1 493.3,381.1 495.9,381.1 498,381.1 498.4,381.1 501,381.1 503.5,381.1 506.1,381.1 507,381.1 508.6,381.1 511.2,381.1 513.7,381.1 516,381.1 516.3,381.1 518.8,379.8 521,378.2 521.4,378.2 523.9,378.2 525.5,378.2 526.4,378.2 529,378.2 530,378.2 531.5,378.2 534.1,378.2 534.5,378.2 536.6,378.2 539,378.2 539.2,378.2 541.7,378 543.5,377.7 544.3,377.6 546.8,377.1 548,376.9 549.4,376.6 551.9,375.8 552.5,375.6 554.5,374.9 557,374 557,374 563.6,366.7 566.9,359.5 569.5,352.2 571.7,344.9 573.8,337.6 575.6,330.4 577.4,323.1 579,315.8 580.6,308.5 582.1,301.3 583.5,294 583.5,294 570.4,289.3 558.6,283.4 546.7,276.4 529,272.5 519,268.5 510,264.7 499.6,259.3 489,253 480,247 471,240.7 462,237 455,236.5 448,237 440,239.5 435.8,241 428.7,245.7 425,250 422.5,253.5 419.2,255.7 409.8,260.5 401.5,266.4 395.5,273 389.6,282.4 387.6,290 382.3,304 373.4,329 362.7,361.2 352,396.8 341.4,432.3 330.7,466" fill="#f0ff00"/>
<polygon points="330.4,467 333.9,455.9 337.1,445.8 338.5,441.4 340.5,435.1 344.1,423.4 345.8,417.7 347.6,411.5 351.2,399.6 353,393.5 354.8,387.4 358.6,374.8 362.2,362.7 362.4,362.1 366.2,350.6 369.6,341.1 369.6,341.1 370.8,344.5 372.5,346.8 373.4,347 374.6,347.6 377,346.7 378.2,345 379.7,345.8 382.8,346.3 385.1,347.9 385.3,348.2 387.5,350.7 389.5,353.5 390.2,353.9 391.5,354.8 393.6,353.9 394.5,353.5 395.8,353 398,352.3 399.8,352.2 400.2,352.2 402.4,352.2 404.6,352.3 405.3,352.3 406.5,352.4 408.3,352.6 410.1,352.9 410.4,353 412,353.3 414,353.6 416,354 416.1,354 418.4,354.5 420.9,354.6 423.4,353.7 425.8,352.7 426.8,352.3 428.3,352.7 430.9,353.3 433.4,354 435.5,354.8 435.9,355 438.4,356.3 441,357.6 443.6,358.2 445.6,358.6 446.3,358.9 449,360 451.7,360.8 454.3,361.7 455.1,361.8 457.3,362.3 460.6,362.9 464.3,363.5 464.5,363.5 466.6,363.8 467.7,363.4 468.3,363.1 469.4,362.7 470.3,362.4 472.8,361.5 475.3,360.9 475.9,360.8 477.9,360.3 480.4,360.2 483,360.2 484.9,360.2 485.6,360.2 488.2,360.2 490.8,360.2 493.4,360.2 494.2,360.1 496,360.2 498.6,360.2 501.2,360.3 503.3,360.3 503.8,360.3 506.4,360.3 508.9,360.3 511.5,360.2 512.4,360.2 514.1,360.2 516.7,360.2 519.3,360.1 521.6,360.1 521.8,360.1 524.4,359 526.7,357.7 527,357.7 529.6,357.7 531.2,357.7 532.2,357.7 534.8,357.6 535.8,357.6 537.4,357.5 540,357.4 540.5,357.4 542.7,357.3 545.1,357.1 545.3,357.1 548.2,356.8 550.4,356.5 551.3,356.3 554.4,355.8 555.9,355.5 557.8,355.3 561.5,354.5 562.4,354.3 565.3,353.6 569.3,352.7 569.3,352.7 571,347.3 572.6,342 574,336.7 575.4,331.3 576.7,326 577.9,320.7 579.1,315.3 580.3,310 581.4,304.7 582.5,299.3 583.5,294 583.5,294 570.4,289.3 558.6,283.4 546.7,276.4 529,272.5 519,268.5 510,264.7 499.6,259.3 489,253 480,247 471,240.7 462,237 455,236.5 448,237 440,239.5 435.8,241 428.7,245.7 425,250 422.5,253.5 419.2,255.7 409.8,260.5 401.5,266.4 395.5,273 389.6,282.4 387.6,290 382.3,304 373.4,329 362.7,361.2 352,396.8 341.4,432.3 330.7,466" fill="#fff000"/>
<polygon points="330.4,467 333.9,455.9 337.1,445.8 338.5,441.4 340.5,435.1 344.1,423.4 345.8,417.7 347.6,411.5 351.2,399.6 353,393.5 354.8,387.4 358.6,374.8 362.2,362.7 362.4,362.1 366.2,350.6 370,339.2 370,339.2 374.5,326 377.7,318.9 378.4,318.9 379.4,319.3 381.7,317.2 382.9,314.6 384.5,315.2 388.1,314.9 390.7,316.1 391,316.3 393.5,318.7 395.8,321.5 396.6,321.6 397.7,322 399.6,321.2 400.4,320.9 401.6,320.5 403.5,320.2 405.2,320.2 405.6,320.2 407.6,320.3 409.6,320.6 410.2,320.7 411.2,321 412.6,321.4 414.1,322 414.3,322 415.6,322.5 417.1,323 418.8,323.7 418.8,323.7 421.2,324.6 423.5,325 426.1,324 428.7,322.9 429.7,322.6 431.3,322.9 434,323.3 436.7,323.8 438.9,324.3 439.3,324.5 442,325.5 444.8,326.5 447.7,327.1 449.9,327.5 450.7,327.7 453.7,328.6 456.8,329 459.8,329.4 460.7,329.5 463.5,329.6 467.7,329.7 472.3,329.7 472.6,329.7 475.2,329.7 476.3,329.3 477,329.1 478.1,328.7 479,328.4 481.6,327.5 484.2,326.8 484.8,326.7 486.8,326.2 489.5,325.8 492.1,325.6 494.1,325.3 494.8,325.2 497.6,324.8 500.5,324.3 503.3,323.8 504.2,323.6 506.1,323.5 508.9,323.2 511.7,322.9 514,322.7 514.5,322.6 517.3,322 520.1,321.5 522.8,320.9 523.8,320.7 525.6,320.3 528.4,319.7 531.2,319 533.7,318.4 534,318.3 536.8,317.3 539.2,316.2 539.6,316.1 542.5,315.4 544.3,315 545.4,314.8 548.3,314 549.4,313.7 551.2,313.1 554.2,312.1 554.7,311.9 557.2,311 560,310 560.3,309.9 563.5,308.6 565.8,307.7 566.7,307.3 569.9,305.8 571.4,305.1 573.2,304.3 576.4,302.7 577.1,302.4 579.5,301.1 582.5,299.3 582.5,299.3 582.6,298.8 582.7,298.4 582.7,297.9 582.8,297.4 582.9,296.9 583,296.4 583.1,295.9 583.2,295.5 583.3,295 583.4,294.5 583.5,294 583.5,294 570.4,289.3 558.6,283.4 546.7,276.4 529,272.5 519,268.5 510,264.7 499.6,259.3 489,253 480,247 471,240.7 462,237 455,236.5 448,237 440,239.5 435.8,241 428.7,245.7 425,250 422.5,253.5 419.2,255.7 409.8,260.5 401.5,266.4 395.5,273 389.6,282.4 387.6,290 382.3,304 373.4,329 362.7,361.2 352,396.8 341.4,432.3 330.7,466" fill="#ffdc00"/>
<polygon points="330.4,467 333.9,455.9 337.1,445.8 338.5,441.4 340.5,435.1 344.1,423.4 345.8,417.7 347.6,411.5 351.2,399.6 353,393.5 354.8,387.4 358.6,374.8 362.2,362.7 362.4,362.1 366.2,350.6 370,339.2 370,339.2 374.5,326 378.9,313.4 380.9,308 383.4,301.1 387.9,288.9 389.4,284.1 391.2,284.5 395.2,283.4 398.5,284.2 398.8,284.4 402.4,286.8 405.4,289.4 406.3,289.2 407.2,289.2 408.8,288.5 409.4,288.3 410.4,288 412.1,288 413.5,288.2 413.8,288.2 415.6,288.4 417.3,289 417.8,289.2 418.6,289.6 419.7,290.2 420.9,291 421,291.1 422.1,291.7 423.3,292.4 424.6,293.4 424.6,293.4 426.8,294.7 429.1,295.4 432,294.3 434.9,293.2 436,293 437.7,293.1 440.6,293.3 443.4,293.6 445.9,293.9 446.3,294 449.1,294.7 452.1,295.5 455.1,295.9 457.4,296.3 458.3,296.5 461.5,297.2 464.8,297.3 468.1,297.2 468.9,297.2 472.1,297 476.7,296.6 481.5,296 481.7,296 484.2,295.7 485.4,295.3 486.1,295.1 487.2,294.7 488.1,294.3 490.9,293.4 493.5,292.8 494.1,292.6 496.2,292 499,291.5 501.7,290.9 503.8,290.4 504.5,290.2 507.6,289.3 510.6,288.4 513.7,287.5 514.6,287.1 516.7,286.8 519.7,286.2 522.7,285.6 525.2,285 525.7,284.9 528.7,283.8 531.7,282.7 534.7,281.6 535.8,281.2 537.7,280.4 540.7,279.2 543.7,277.9 546.4,276.7 546.7,276.6 549,277.8 551,278.9 551.3,279.1 553.6,280.5 555,281.3 555.9,281.8 558.2,283.2 559.1,283.6 560.5,284.3 562.8,285.5 563.2,285.7 565.1,286.7 567.3,287.7 567.5,287.8 569.8,289 571.4,289.7 572.1,289.9 574.4,290.7 575.5,291.1 576.7,291.6 579,292.4 579.5,292.6 581.2,293.2 583.5,294 583.5,294 583.5,294 583.5,294 583.5,294 583.5,294 583.5,294 583.5,294 583.5,294 583.5,294 583.5,294 583.5,294 583.5,294 583.5,294 570.4,289.3 558.6,283.4 546.7,276.4 529,272.5 519,268.5 510,264.7 499.6,259.3 489,253 480,247 471,240.7 462,237 455,236.5 448,237 440,239.5 435.8,241 428.7,245.7 425,250 422.5,253.5 419.2,255.7 409.8,260.5 401.5,266.4 395.5,273 389.6,282.4 387.6,290 382.3,304 373.4,329 362.7,361.2 352,396.8 341.4,432.3 330.7,466" fill="#ffc800"/>
<polygon points="330.4,467 333.9,455.9 337.1,445.8 338.5,441.4 340.5,435.1 344.1,423.4 345.8,417.7 347.6,411.5 351.2,399.6 353,393.5 354.8,387.4 358.6,374.8 362.2,362.7 362.4,362.1 366.2,350.6 370,339.2 370,339.2 374.5,326 378.9,313.4 380.9,308 383.4,301.1 387.9,288.9 390,281.8 393.2,276.6 399.4,268.7 405,263.9 405.7,263.4 413.5,258.6 419.6,257.4 420.9,256.9 421.6,256.4 422.7,255.9 423.2,255.6 423.9,255.6 425.1,255.9 426.1,256.1 426.4,256.2 427.7,256.5 429,257.3 429.5,257.6 430.2,258.2 431.2,259.1 432.2,260 432.3,260.1 433.2,260.9 434.2,261.8 435.3,263.1 435.3,263.1 437.1,264.9 439.4,265.8 442.7,264.6 446.1,263.5 447.4,263.3 449.2,263.3 452.1,263.3 455,263.4 457.5,263.4 457.9,263.5 460.6,263.8 463.4,264.4 466.2,264.8 468.2,265.1 469,265.3 472.1,265.8 475.4,265.5 478.7,265 479.5,264.9 482.7,264.3 487,263.4 491.2,262.3 491.5,262.3 493.6,261.7 494.8,261.3 495.5,261 496.7,260.6 497.6,260.3 500.3,259.7 502.5,260.8 503,261.1 504.8,262 507,263.2 509.3,264.3 511,265.1 511.6,265.4 514.2,266.5 516.7,267.5 519.3,268.6 520,268.9 521.8,269.6 524.3,270.6 526.9,271.7 529,272.5 529.4,272.6 532,273.2 534.5,273.7 536.9,274.2 537.8,274.4 539.4,274.8 541.8,275.3 544.3,275.9 546.5,276.4 546.7,276.4 549,277.8 551,278.9 551.3,279.1 553.6,280.5 555,281.3 555.9,281.8 558.2,283.2 559.1,283.6 560.5,284.3 562.8,285.5 563.2,285.7 565.1,286.7 567.3,287.7 567.5,287.8 569.8,289 571.4,289.7 572.1,289.9 574.4,290.7 575.5,291.1 576.7,291.6 579,292.4 579.5,292.6 581.2,293.2 583.5,294 583.5,294 583.5,294 583.5,294 583.5,294 583.5,294 583.5,294 583.5,294 583.5,294 583.5,294 583.5,294 583.5,294 583.5,294 583.5,294 570.4,289.3 558.6,283.4 546.7,276.4 529,272.5 519,268.5 510,264.7 499.6,259.3 489,253 480,247 471,240.7 462,237 455,236.5 448,237 440,239.5 435.8,241 428.7,245.7 425,250 422.5,253.5 419.2,255.7 409.8,260.5 401.5,266.4 395.5,273 389.6,282.4 387.6,290 382.3,304 373.4,329 362.7,361.2 352,396.8 341.4,432.3 330.7,466" fill="#ffb400"/>
<g fill="none" stroke="#0a0a00" stroke-width="0.82" stroke-linejoin="round">
<polyline points="336.6,461.6 336.7,460.4 336.7,459.1 336.8,457.9 336.9,456.6 337,455.3 337.1,454.1 337.1,452.8 337.2,451.5 337.4,450.3 337.5,449 337.6,447.7 337.7,446.5 337.9,445.2 338.1,444 338.3,442.7 338.5,441.4"/>
<polyline points="341.8,457.1 341.9,454.7 342.1,452.2 342.3,449.8 342.4,447.3 342.6,444.8 342.8,442.4 342.9,439.9 343.1,437.4 343.4,435 343.6,432.5 343.9,430 344.2,427.6 344.5,425.1 344.9,422.7 345.3,420.2 345.8,417.7"/>
<polyline points="347,452.6 347.2,448.9 347.5,445.2 347.7,441.6 347.9,437.9 348.2,434.2 348.4,430.5 348.7,426.8 349,423.1 349.4,419.4 349.8,415.7 350.2,412 350.6,408.3 351.1,404.6 351.7,400.9 352.3,397.2 353,393.5"/>
<polyline points="353.2,447.3 353.5,442 353.9,436.7 354.2,431.4 354.6,426.1 355,420.9 355.4,415.6 355.8,410.3 356.3,405 356.8,399.7 357.4,394.4 358,389.1 358.7,383.9 359.4,378.6 360.3,373.3 361.2,368 362.2,362.7"/>
<polyline points="358.4,442.8 358.8,436.3 359.3,429.8 359.7,423.4 360.2,416.9 360.7,410.4 361.2,404 361.7,397.5 362.4,391 363,384.5 363.7,378.1 364.5,371.6 365.4,365.1 366.4,358.6 367.5,352.2 368.7,345.7 370,339.2"/>
<polyline points="364.6,437.4 365.2,429.3 365.8,421.2 366.5,413.2 367.1,405.1 367.8,397 368.5,388.9 369.3,380.8 370.1,372.7 371.1,364.6 372.1,356.5 373.2,348.4 374.4,340.4 375.8,332.3 377.3,324.2 379,316.1 380.9,308"/>
<polyline points="369.8,432.9 370.6,423.5 371.3,414 372.1,404.6 372.9,395.1 373.8,385.7 374.7,376.2 375.6,366.8 376.7,357.3 377.8,347.9 379.1,338.5 380.5,329 382,319.6 383.7,310.1 385.6,300.7 387.7,291.2 390,281.8"/>
<polyline points="376,427.6 377,417.3 378.1,407.1 379.1,396.9 380.2,386.7 381.4,376.4 382.6,366.2 384,356 385.5,345.7 387.1,335.5 388.9,325.3 390.9,315.1 393.2,304.8 395.7,294.6 398.5,284.4 401.6,274.1 405,263.9"/>
<polyline points="382.2,422.2 383.3,411.5 384.4,400.9 385.5,390.2 386.7,379.5 388.1,368.8 389.6,358.2 391.3,347.5 393.3,336.8 395.5,326.1 398.1,315.5 401.1,304.8 404.6,294.1 408.5,283.4 413.1,272.8 418.2,262.1 424,251.4"/>
<polyline points="387.4,415.7 388.5,405.1 389.5,394.5 390.7,383.9 391.9,373.4 393.2,362.8 394.7,352.2 396.4,341.6 398.3,331 400.5,320.5 403,309.9 405.9,299.3 409.3,288.7 413.1,278.1 417.5,267.6 422.5,257 428.1,246.4"/>
<polyline points="393.6,407.7 394.6,397.4 395.7,387.1 396.8,376.8 398,366.5 399.2,356.2 400.7,345.9 402.3,335.6 404.2,325.3 406.3,315 408.8,304.7 411.6,294.4 414.8,284.1 418.5,273.8 422.8,263.5 427.6,253.2 433,242.9"/>
<polyline points="399.9,401.5 400.9,391.5 401.9,381.4 403,371.3 404.2,361.2 405.4,351.1 406.8,341 408.4,330.9 410.2,320.9 412.3,310.8 414.7,300.7 417.4,290.6 420.6,280.5 424.1,270.4 428.2,260.3 432.9,250.3 438.1,240.2"/>
<polyline points="407.1,395 407.8,385.2 408.5,375.4 409.2,365.6 410.1,355.8 411.1,346 412.2,336.2 413.6,326.4 415.2,316.6 417.1,306.8 419.4,297 422.1,287.2 425.3,277.4 429.1,267.6 433.4,257.8 438.3,248 444,238.2"/>
<polyline points="414.4,389 414.8,379.5 415.2,370 415.7,360.5 416.2,351 416.9,341.5 417.8,331.9 419,322.4 420.5,312.9 422.3,303.4 424.5,293.9 427.2,284.4 430.4,274.9 434.2,265.4 438.7,255.9 444,246.4 450,236.9"/>
<polyline points="425.6,379.5 425.9,370.6 426.3,361.7 426.8,352.9 427.4,344 428.2,335.1 429.2,326.2 430.6,317.3 432.2,308.5 434.2,299.6 436.7,290.7 439.6,281.8 443.1,272.9 447.1,264.1 451.7,255.2 457,246.3 463,237.4"/>
<polyline points="434.4,378.7 434.7,370 435.1,361.4 435.7,352.7 436.4,344.1 437.4,335.4 438.5,326.8 440,318.1 441.8,309.5 443.9,300.8 446.4,292.2 449.2,283.5 452.5,274.9 456.2,266.2 460.3,257.6 464.9,248.9 470,240.3"/>
<polyline points="444.3,380.1 444.7,371.7 445.2,363.2 446,354.8 446.9,346.3 448.1,337.9 449.5,329.4 451.2,321 453.1,312.5 455.2,304.1 457.6,295.6 460.2,287.2 463.1,278.7 466.2,270.3 469.5,261.8 473.1,253.4 477,244.9"/>
<polyline points="453.3,383.4 453.7,375 454.5,366.7 455.5,358.4 456.7,350.1 458.2,341.8 459.8,333.5 461.6,325.2 463.6,316.8 465.8,308.5 468.1,300.2 470.5,291.9 473.1,283.6 475.9,275.3 478.8,267 481.8,258.6 485,250.3"/>
<polyline points="461.7,385.7 463.4,377.6 465.2,369.6 467.2,361.5 469.2,353.4 471.2,345.3 473.2,337.3 475.3,329.2 477.5,321.1 479.6,313.1 481.7,305 483.9,296.9 486.1,288.8 488.3,280.8 490.5,272.7 492.8,264.6 495,256.6"/>
<polyline points="471,381.9 472.6,374.4 474.4,366.8 476.3,359.3 478.2,351.7 480.1,344.2 482.1,336.6 484.1,329.1 486.2,321.5 488.2,313.9 490.3,306.4 492.4,298.8 494.5,291.3 496.6,283.7 498.7,276.2 500.9,268.6 503,261.1"/>
<polyline points="480,381.1 481.6,373.9 483.3,366.6 485.1,359.4 487,352.1 488.9,344.9 490.8,337.6 492.8,330.4 494.7,323.1 496.7,315.9 498.7,308.6 500.7,301.4 502.8,294.1 504.8,286.9 506.9,279.6 508.9,272.4 511,265.1"/>
<polyline points="489,381.1 490.6,374.1 492.4,367.1 494.2,360.1 496,353.1 497.9,346 499.9,339 501.8,332 503.8,325 505.8,318 507.8,311 509.8,304 511.8,296.9 513.8,289.9 515.9,282.9 517.9,275.9 520,268.9"/>
<polyline points="498,381.1 499.6,374.3 501.4,367.5 503.2,360.7 505.1,354 507,347.2 508.9,340.4 510.8,333.6 512.8,326.8 514.8,320 516.8,313.2 518.8,306.4 520.8,299.6 522.8,292.9 524.9,286.1 526.9,279.3 529,272.5"/>
<polyline points="507,381.1 508.6,374.4 510.4,367.8 512.2,361.1 514.1,354.4 516,347.8 517.9,341.1 519.8,334.4 521.8,327.8 523.7,321.1 525.7,314.4 527.7,307.8 529.7,301.1 531.7,294.4 533.7,287.8 535.8,281.1 537.8,274.4"/>
<polyline points="516,381.1 517.6,374.6 519.4,368 521.2,361.5 523,354.9 524.9,348.4 526.8,341.8 528.7,335.3 530.6,328.7 532.6,322.2 534.5,315.6 536.5,309.1 538.5,302.5 540.5,296 542.5,289.4 544.5,282.9 546.5,276.4"/>
<polyline points="521,378.2 522.6,372 524.3,365.8 526.1,359.6 527.9,353.4 529.8,347.2 531.6,341 533.5,334.8 535.4,328.6 537.3,322.4 539.3,316.2 541.2,310 543.1,303.7 545.1,297.5 547,291.3 549,285.1 551,278.9"/>
<polyline points="525.5,378.2 527.1,372.1 528.8,366.1 530.5,360 532.3,354 534.2,347.9 536,341.9 537.8,335.8 539.7,329.8 541.6,323.7 543.5,317.6 545.4,311.6 547.3,305.5 549.2,299.5 551.2,293.4 553.1,287.4 555,281.3"/>
<polyline points="530,378.2 531.6,372.3 533.3,366.4 535,360.5 536.8,354.6 538.5,348.7 540.4,342.7 542.2,336.8 544,330.9 545.9,325 547.7,319.1 549.6,313.2 551.5,307.3 553.4,301.4 555.3,295.5 557.2,289.6 559.1,283.6"/>
<polyline points="534.5,378.2 536.1,372.4 537.7,366.6 539.4,360.9 541.2,355.1 542.9,349.3 544.7,343.5 546.5,337.7 548.3,331.9 550.2,326.2 552,320.4 553.8,314.6 555.7,308.8 557.6,303 559.4,297.3 561.3,291.5 563.2,285.7"/>
<polyline points="539,378.2 540.5,372.5 542.2,366.9 543.9,361.2 545.6,355.6 547.3,349.9 549.1,344.3 550.9,338.6 552.7,333 554.5,327.3 556.3,321.7 558.1,316 559.9,310.4 561.7,304.7 563.6,299.1 565.4,293.4 567.3,287.7"/>
<polyline points="543.5,377.7 545.3,372.2 547.1,366.7 548.9,361.2 550.6,355.7 552.4,350.2 554.1,344.7 555.9,339.2 557.6,333.7 559.3,328.2 561.1,322.7 562.8,317.2 564.5,311.7 566.2,306.2 568,300.7 569.7,295.2 571.4,289.7"/>
<polyline points="548,376.9 550.3,371.5 552.2,366.2 554.1,360.8 555.9,355.4 557.7,350.1 559.4,344.7 561.1,339.4 562.7,334 564.4,328.6 566,323.3 567.6,317.9 569.2,312.6 570.8,307.2 572.4,301.8 573.9,296.5 575.5,291.1"/>
<polyline points="552.5,375.6 556,370.4 558.3,365.2 560.3,360 562.2,354.8 563.9,349.7 565.6,344.5 567.1,339.3 568.7,334.1 570.1,328.9 571.6,323.7 573,318.5 574.3,313.3 575.7,308.1 577,302.9 578.2,297.8 579.5,292.6"/>
<polyline points="557,374 562.3,369 564.9,364 567,359 568.9,354 570.5,349 572,344 573.4,339 574.7,334 576,329 577.2,324 578.3,319 579.4,314 580.5,309 581.5,304 582.5,299 583.5,294"/>
<polyline points="340.7,455.6 342,454.2 343.3,452.6 345.9,449.7 347.3,448.2 348.5,446.7 351.1,443.7 353.6,440.9 353.7,440.8 356.3,437.9 358.9,435 358.9,435 361.6,431.9 364.2,428.9 365.3,427.6 366.8,426 369.5,423 370.7,421.5 372.1,420 374.9,417.4 377.2,415.2 377.5,415 380,412.6 382.6,410.2 383.5,409.3 385.2,407.7 387.7,404.2 388.7,402.9 390.2,400.8 392.8,397.4 394.9,395.3 395.3,394.8 397.8,392.4 400.4,390 401.1,389.3 402.8,387.7 405.2,385.4 407.6,383.4 407.9,383.2 410,381.4 412.5,379.4 414.9,377.5 414.9,377.5 417.4,375.5 420,373.5 422.5,371.5 425,369.5 426,368.8 427.5,368.8 430.1,368.7 432.6,368.6 434.8,368.8 435.2,368.9 437.7,369.5 440.2,370.1 442.8,370.7 444.7,371.3 445.4,371.6 447.9,372.8 450.5,374 453,375.1 453.7,375.4 455.6,376.1 458.4,377 461.3,378 461.5,378"/>
<polyline points="340.9,452.9 342.2,451.2 343.5,449.3 346.2,445.6 347.5,443.7 348.8,441.9 351.5,438.1 354,434.5 354.1,434.3 356.8,430.7 359.5,427.1 359.5,427.1 362.2,423.3 364.9,419.5 366.1,417.9 367.6,415.7 370.4,412 371.6,410.1 373.2,408.3 376,405.3 378.5,402.8 378.7,402.6 381.3,400 383.9,397.5 384.8,396.4 386.5,394.8 389,391.4 390,390.1 391.5,388 394.1,384.8 396.1,382.8 396.6,382.4 399.1,380.1 401.6,377.8 402.4,377.1 404,375.6 406.2,373.4 408.5,371.5 408.8,371.3 410.8,369.7 413.1,367.8 415.4,366 415.4,366 417.9,364.1 420.5,362.3 423,360.5 425.5,358.7 426.5,358.2 428,358.2 430.6,358.4 433.1,358.5 435.3,358.9 435.7,359 438.2,359.8 440.8,360.7 443.4,361.7 445.3,362.4 445.9,362.8 448.6,364.3 451.2,365.7 453.7,367.1 454.4,367.4 456.5,368.3 459.5,369.5 462.7,370.7 462.9,370.7"/>
<polyline points="341.1,450.3 342.3,448.2 343.8,445.9 346.4,441.5 347.8,439.2 349.1,437 351.9,432.5 354.5,428.1 354.6,427.9 357.3,423.6 360,419.3 360,419.3 362.8,414.6 365.6,410 366.9,408.1 368.5,405.5 371.3,401.1 372.6,398.6 374.2,396.6 377.3,393.1 379.8,390.5 380,390.2 382.7,387.4 385.3,384.7 386.3,383.5 387.9,381.8 390.4,378.6 391.4,377.3 393,375.3 395.4,372.3 397.5,370.3 398,369.9 400.5,367.7 403,365.6 403.7,364.9 405.2,363.5 407.4,361.4 409.5,359.7 409.8,359.4 411.6,357.9 413.8,356.1 416,354.5 416,354.5 418.6,352.8 421.1,351.1 423.6,349.5 426.2,347.9 427.1,347.5 428.7,347.7 431.2,348.1 433.8,348.4 436,349 436.4,349.2 438.9,350.2 441.5,351.4 444.1,352.6 446.1,353.6 446.8,354.1 449.4,355.8 452.1,357.4 454.7,359 455.4,359.4 457.5,360.5 460.7,361.9 464.3,363.4 464.5,363.5"/>
<polyline points="341.2,447.7 342.5,445.2 344,442.5 346.7,437.4 348.1,434.8 349.5,432.2 352.3,426.8 354.9,421.7 355,421.5 357.8,416.4 360.6,411.5 360.6,411.5 363.5,405.9 366.4,400.6 367.7,398.3 369.3,395.3 372.2,390.1 373.6,387.2 375.3,384.9 378.5,380.9 381.2,378.1 381.4,377.8 384.2,374.8 386.9,372 387.8,370.6 389.5,368.9 392,365.7 393,364.5 394.5,362.6 397,359.7 399,357.9 399.5,357.5 402,355.3 404.5,353.3 405.2,352.7 406.6,351.3 408.6,349.5 410.6,347.8 410.9,347.6 412.7,346.1 414.7,344.5 416.8,343 416.8,343 419.4,341.4 421.9,339.9 424.5,338.4 427,337.1 428,336.8 429.6,337.2 432.2,337.8 434.7,338.4 436.9,339.2 437.3,339.3 439.9,340.6 442.5,342 445.2,343.5 447.1,344.7 447.8,345.3 450.5,347.3 453.2,349.2 455.8,350.9 456.5,351.4 458.8,352.7 462.2,354.4 465.9,356.1 466.1,356.2"/>
<polyline points="341.4,445 342.8,442.2 344.2,439.2 347,433.3 348.5,430.3 349.8,427.3 352.7,421.2 355.4,415.3 355.5,415 358.4,409.3 361.2,403.6 361.2,403.6 364.2,397.3 367.3,391.1 368.6,388.5 370.3,385.1 373.3,379.1 374.7,375.8 376.5,373.1 379.9,368.8 382.7,365.7 383,365.4 385.8,362.2 388.6,359.2 389.7,357.6 391.3,356 393.8,352.9 394.8,351.7 396.3,349.9 398.7,347.2 400.8,345.4 401.2,345 403.7,343 406.2,341.1 406.9,340.5 408.2,339.2 410.1,337.5 412,335.9 412.3,335.7 414,334.4 415.9,332.8 417.9,331.5 417.9,331.5 420.5,330.1 423.1,328.7 425.7,327.4 428.3,326.3 429.2,326.2 430.8,326.6 433.4,327.5 436,328.3 438.2,329.3 438.6,329.5 441.2,331 443.8,332.7 446.5,334.5 448.4,335.9 449.1,336.6 451.9,338.8 454.6,340.9 457.2,342.9 457.9,343.4 460.3,344.9 463.7,346.8 467.6,348.7 467.9,348.9"/>
<polyline points="341.6,442.4 343,439.3 344.5,435.8 347.3,429.2 348.8,425.8 350.2,422.5 353.1,415.5 355.9,408.9 356.1,408.6 359,402.2 361.9,395.8 361.9,395.8 365,388.6 368.2,381.7 369.5,378.7 371.3,374.9 374.4,368.2 375.9,364.4 377.8,361.4 381.4,356.6 384.4,353.3 384.6,353 387.7,349.6 390.7,346.5 391.8,344.7 393.4,343.1 395.9,340 396.8,338.9 398.3,337.2 400.7,334.6 402.8,332.9 403.2,332.6 405.7,330.6 408.1,328.8 408.8,328.3 410.1,327.1 411.9,325.5 413.7,324.1 414,323.9 415.6,322.6 417.4,321.2 419.3,320 419.4,320 422,318.7 424.6,317.5 427.3,316.4 429.9,315.5 430.9,315.5 432.4,316.1 435,317.1 437.6,318.2 439.8,319.4 440.2,319.6 442.8,321.4 445.4,323.3 448,325.4 450,327.1 450.7,327.8 453.4,330.3 456.1,332.6 458.7,334.8 459.4,335.4 461.8,337.1 465.4,339.3 469.4,341.4 469.6,341.6"/>
<polyline points="341.9,439.8 343.2,436.3 344.8,432.5 347.7,425.1 349.2,421.3 350.6,417.6 353.6,409.9 356.5,402.5 356.7,402.2 359.7,395 362.7,388 362.7,388 365.9,379.9 369.2,372.2 370.6,368.9 372.4,364.7 375.7,357.2 377.2,352.9 379.2,349.7 383.1,344.4 386.2,341 386.5,340.6 389.8,337 393.1,333.7 394.3,331.8 395.9,330.1 398.3,327.2 399.3,326.1 400.7,324.5 403.1,322.1 405.1,320.5 405.6,320.1 408,318.2 410.4,316.6 411.1,316.1 412.4,315 414.1,313.5 415.8,312.2 416.1,312 417.6,310.9 419.4,309.5 421.3,308.5 421.3,308.5 423.9,307.3 426.6,306.3 429.3,305.4 432,304.7 433,304.9 434.5,305.6 437.1,306.8 439.6,308.2 441.8,309.5 442.2,309.8 444.7,311.8 447.3,314 449.9,316.3 451.8,318.3 452.5,319.1 455.1,322 457.8,324.4 460.4,326.9 461.1,327.5 463.6,329.4 467.2,331.8 471.2,334.2 471.4,334.4"/>
<polyline points="342.1,437.2 343.5,433.3 345.1,429.1 348.1,421 349.6,416.9 351.1,412.8 354.2,404.3 357.2,396.1 357.3,395.7 360.4,387.9 363.5,380.2 363.5,380.1 366.9,371.3 370.3,362.8 371.7,359.1 373.7,354.5 377.1,346.3 378.7,341.5 380.8,337.9 385,332.3 388.3,328.6 388.6,328.2 392.3,324.4 395.9,320.9 397.2,318.9 398.8,317.2 401.2,314.4 402.2,313.3 403.6,311.7 406,309.5 407.9,308 408.4,307.7 410.8,305.9 413.2,304.4 413.9,303.9 415.1,302.9 416.7,301.6 418.4,300.3 418.6,300.2 420.1,299.1 421.9,297.9 423.7,297 423.7,297 426.5,296 429.2,295.1 432,294.4 434.7,293.9 435.7,294.2 437.2,295.1 439.6,296.5 442.1,298.1 444.2,299.6 444.6,299.9 447,302.2 449.5,304.9 451.9,307.8 453.7,310.2 454.3,311.2 456.9,314.3 459.5,317 462.1,319.6 462.8,320.3 465.3,322.2 468.9,324.9 472.9,327.5 473.2,327.6"/>
<polyline points="342.4,434.5 343.9,430.3 345.5,425.7 348.5,416.9 350.1,412.4 351.7,407.9 354.9,398.6 357.9,389.7 358.1,389.3 361.2,380.8 364.4,372.3 364.4,372.3 368,362.6 371.5,353.4 373.1,349.4 375.1,344.2 378.6,335.3 380.3,330.1 382.6,326.2 387.1,320.1 390.7,316.2 391.1,315.8 395.2,311.8 399.3,308.2 400.8,306 402.3,304.3 404.7,301.5 405.6,300.5 407,299 409.3,297 411.2,295.5 411.7,295.2 414,293.5 416.4,292.1 417.1,291.7 418.3,290.8 419.9,289.6 421.6,288.5 421.8,288.3 423.3,287.4 425,286.3 426.9,285.5 426.9,285.5 429.7,284.6 432.5,283.9 435.3,283.3 438.1,283.1 439,283.5 440.4,284.5 442.8,286.2 445.1,288.2 447,290.2 447.3,290.6 449.5,293.5 451.7,296.8 453.9,300.3 455.5,302.9 456.1,304 458.6,307.4 461.3,310.2 463.7,312.9 464.4,313.6 466.9,315.7 470.6,318.5 474.6,321.3 474.8,321.4"/>
<polyline points="345.9,422.4 349,412.8 350.7,407.9 352.3,403.1 355.6,393 358.7,383.3 358.9,382.9 362.2,373.7 365.5,364.5 365.5,364.5 369.2,353.9 373,343.9 374.6,339.6 376.7,334 380.4,324.3 382.2,318.7 384.7,314.5 389.4,308 393.4,303.8 393.8,303.4 398.5,299.3 403.3,295.5 404.9,293.1 406.5,291.4 408.8,288.7 409.6,287.7 411,286.3 413.3,284.4 415.2,283.1 415.6,282.8 417.9,281.1 420.2,279.9 420.9,279.5 422.1,278.7 423.8,277.6 425.5,276.6 425.7,276.5 427.2,275.6 428.9,274.6 430.8,274 430.8,274 433.6,273.3 436.5,272.7 439.4,272.3 442.1,272.3 443,273 444.2,274.4 446.2,277 448.1,279.7 449.7,282.2 450,282.7 451.8,286.1 453.8,289.8 455.8,293.5 457.4,296.4 457.9,297.6 460.4,301.1 462.9,303.9 465.4,306.8 466,307.5 468.5,309.7 472.2,312.6 476.1,315.5 476.4,315.6"/>
<polyline points="351.2,404.1 352.8,399 356.3,388.2 359.5,378 359.7,377.5 363.1,367.6 366.5,357.9 366.5,357.9 370.4,346.6 374.3,336 376,331.3 378.2,325.4 382.1,315.1 383.9,309 386.6,304.6 391.7,297.7 396,293.4 396.5,293 401.8,288.6 407.1,284.7 409,282.2 410.5,280.5 412.7,277.9 413.6,276.9 415,275.6 417.2,273.9 419,272.6 419.4,272.3 421.7,270.7 423.9,269.6 424.6,269.3 425.8,268.5 427.6,267.5 429.3,266.6 429.5,266.5 431.1,265.7 432.9,264.8 434.7,264.3 434.7,264.3 437.7,263.7 440.6,263.3 443.5,263.1 446.2,263.4 446.8,264.5 447.7,266.4 449.3,269.5 450.9,272.7 452.2,275.5 452.5,276 454.1,279.7 455.9,283.6 457.7,287.6 459.1,290.6 459.7,291.8 462,295.4 464.5,298.3 466.9,301.1 467.6,301.9 470.1,304.1 473.7,307.2 477.6,310.1 477.8,310.3"/>
<polyline points="356.8,384.7 360.2,374 360.3,373.5 363.8,363.2 367.3,353 367.3,353 371.4,341.2 375.4,330.1 377.1,325.2 379.4,319.1 383.4,308.3 385.3,301.9 388.1,297.3 393.5,290.1 398.1,285.7 398.6,285.3 404.5,280.8 410.4,276.8 412.4,274.2 413.9,272.4 416.1,269.9 416.9,268.9 418.2,267.7 420.4,266.1 422.2,264.8 422.6,264.6 424.8,263 427,262 427.7,261.7 428.9,261 430.7,260.1 432.5,259.2 432.8,259.1 434.4,258.4 436.2,257.5 438.1,257.1 438.1,257.1 441.1,256.7 444,256.3 446.9,256.2 449.6,256.7 450.1,258 450.8,260.1 452.1,263.4 453.4,266.8 454.6,269.8 454.8,270.3 456.2,274.1 457.8,278.2 459.5,282.3 460.8,285.4 461.3,286.6 463.6,290.2 466,293.1 468.4,296 469.1,296.8 471.5,299.1 475.1,302.1 478.9,305.1 479.2,305.3"/>
<polyline points="368,349.4 368,349.4 372.1,337.3 376.2,325.7 378,320.7 380.4,314.4 384.5,303.2 386.5,296.6 389.4,291.9 394.9,284.5 399.7,280 400.3,279.5 406.6,275 413,270.9 415.2,268.2 416.6,266.5 418.7,264 419.6,263.1 420.9,261.8 423,260.3 424.7,259.1 425.1,258.8 427.3,257.3 429.5,256.3 430.1,256 431.5,255.4 433.3,254.6 435.2,253.8 435.4,253.7 437,253 438.9,252.2 440.9,251.8 440.9,251.8 443.8,251.4 446.8,251.1 449.7,251.1 452.3,251.7 452.9,253.1 453.4,255.2 454.5,258.6 455.6,262 456.7,265 456.9,265.6 458.2,269.4 459.6,273.4 461.2,277.5 462.4,280.7 462.9,281.9 465.1,285.5 467.5,288.4 469.8,291.3 470.5,292.1 472.9,294.4 476.4,297.5 480.2,300.5 480.4,300.7"/>
<polyline points="381.1,310.9 385.3,299.5 387.3,292.7 390.3,287.9 396,280.4 401,275.8 401.6,275.3 408.3,270.7 415,266.6 417.3,263.8 418.7,262.1 420.8,259.6 421.6,258.7 422.9,257.5 425,256 426.8,254.8 427.1,254.6 429.3,253.1 431.5,252.2 432.1,251.9 433.4,251.3 435.3,250.5 437.2,249.7 437.5,249.6 439.2,249 441.1,248.2 443.1,247.9 443.1,247.9 446,247.6 449,247.3 452,247.4 454.6,248 455.1,249.3 455.6,251.3 456.6,254.7 457.6,258 458.6,261 458.8,261.5 460,265.3 461.3,269.3 462.7,273.4 463.9,276.4 464.4,277.7 466.5,281.3 468.9,284.1 471.2,287 471.8,287.8 474.2,290.1 477.7,293.2 481.4,296.2 481.6,296.4"/>
<polyline points="416.6,263.3 419,260.6 420.3,258.8 422.4,256.4 423.2,255.5 424.5,254.3 426.6,252.9 428.3,251.7 428.7,251.4 430.8,250 433,249.1 433.6,248.8 435,248.2 436.9,247.5 438.8,246.8 439.1,246.7 440.8,246 442.8,245.3 444.8,245 444.8,245 447.8,244.7 450.7,244.5 453.7,244.6 456.3,245.2 456.9,246.5 457.4,248.3 458.3,251.5 459.4,254.7 460.3,257.6 460.5,258.1 461.6,261.7 462.8,265.6 464.2,269.6 465.3,272.7 465.7,273.9 467.8,277.4 470.2,280.2 472.4,283.1 473.1,283.8 475.4,286.1 478.9,289.2 482.5,292.2 482.8,292.4"/>
<polyline points="425.7,251.9 427.8,250.5 429.5,249.4 429.9,249.1 432,247.7 434.1,246.8 434.7,246.6 436.1,246 438.1,245.2 440.1,244.5 440.3,244.5 442.1,243.8 444.1,243.1 446.1,242.9 446.1,242.9 449.1,242.6 452,242.4 455,242.5 457.6,243.1 458.3,244.3 458.8,246 459.8,249 460.8,252 461.8,254.7 461.9,255.2 463,258.7 464.2,262.4 465.5,266.3 466.6,269.3 467,270.4 469.1,273.9 471.4,276.7 473.6,279.5 474.2,280.2 476.6,282.5 480,285.6 483.6,288.6 483.8,288.7"/>
<polyline points="426.7,250.2 428.7,248.8 430.4,247.7 430.8,247.4 432.9,246 435,245.1 435.6,244.9 437,244.3 439,243.6 441,242.9 441.3,242.8 443,242.2 445.1,241.5 447.1,241.3 447.1,241.3 450.1,241 453,240.9 456,241 458.7,241.6 459.4,242.6 460,244.2 461,246.9 462.1,249.8 463.1,252.3 463.2,252.7 464.3,256 465.5,259.7 466.7,263.4 467.7,266.2 468.2,267.4 470.2,270.7 472.5,273.4 474.7,276.2 475.3,276.9 477.7,279.1 481,282.2 484.6,285.1 484.8,285.3"/>
<polyline points="427.3,248.9 429.4,247.5 431.1,246.4 431.4,246.1 433.5,244.8 435.6,243.9 436.3,243.6 437.7,243.1 439.7,242.4 441.7,241.7 442,241.6 443.8,241 445.8,240.3 447.8,240.1 447.9,240.1 450.8,239.9 453.8,239.7 456.7,239.9 459.5,240.4 460.2,241.4 460.9,242.8 462,245.3 463.2,247.9 464.2,250.2 464.3,250.7 465.4,253.8 466.6,257.2 467.9,260.8 468.8,263.5 469.3,264.6 471.3,267.9 473.6,270.5 475.8,273.1 476.4,273.8 478.7,276.1 482,279.1 485.5,282 485.7,282.1"/>
<polyline points="427.9,247.9 429.9,246.6 431.6,245.5 431.9,245.2 434,243.8 436.1,242.9 436.7,242.7 438.2,242.2 440.2,241.5 442.2,240.8 442.5,240.7 444.3,240.1 446.3,239.5 448.4,239.3 448.4,239.3 451.4,239 454.3,238.9 457.3,239.1 460.1,239.5 460.9,240.4 461.7,241.7 462.9,243.9 464.1,246.4 465.1,248.5 465.3,248.9 466.4,251.8 467.6,255.1 468.9,258.5 469.8,261 470.3,262.1 472.3,265.2 474.5,267.8 476.7,270.4 477.3,271.1 479.6,273.2 482.9,276.2 486.3,279 486.5,279.2"/>
<polyline points="428.3,247.2 430.3,245.9 431.9,244.8 432.3,244.5 434.4,243.1 436.5,242.3 437.1,242 438.5,241.5 440.6,240.8 442.6,240.2 442.9,240.1 444.7,239.5 446.8,238.8 448.8,238.6 448.8,238.6 451.8,238.4 454.8,238.3 457.7,238.5 460.5,238.9 461.4,239.7 462.2,240.8 463.6,242.9 464.9,245.1 466,247.1 466.1,247.4 467.3,250.2 468.5,253.2 469.8,256.4 470.8,258.9 471.2,259.8 473.2,262.9 475.5,265.3 477.6,267.8 478.2,268.5 480.5,270.6 483.7,273.5 487.1,276.3 487.3,276.5"/>
<polyline points="461.8,239.1 462.7,240.1 464.1,242 465.5,244 466.7,245.8 466.8,246.2 468,248.7 469.3,251.6 470.6,254.6 471.6,256.9 472.1,257.8 474.1,260.7 476.3,263.1 478.5,265.5 479.1,266.2 481.3,268.3 484.5,271.1 487.9,273.8 488.1,273.9"/>
<polyline points="463,239.6 464.6,241.3 466,243.1 467.3,244.8 467.5,245.1 468.7,247.5 470,250.1 471.4,252.9 472.4,255.1 472.8,256 474.9,258.8 477.1,261.1 479.2,263.4 479.8,264 482.1,266.1 485.3,268.8 488.5,271.4 488.7,271.6"/>
<polyline points="464.9,240.7 466.5,242.4 467.8,243.9 468,244.2 469.3,246.4 470.6,248.9 472,251.5 473.1,253.5 473.5,254.4 475.6,257 477.8,259.2 480,261.5 480.6,262.1 482.8,264 485.9,266.7 489.2,269.2 489.4,269.4"/>
<polyline points="466.9,241.8 468.2,243.2 468.4,243.5 469.8,245.5 471.2,247.8 472.6,250.2 473.7,252.1 474.2,252.9 476.2,255.4 478.5,257.5 480.6,259.7 481.2,260.3 483.5,262.2 486.6,264.8 489.8,267.2 490,267.4"/>
<polyline points="467.2,241.3 468.6,242.6 468.8,242.8 470.3,244.7 471.7,246.8 473.2,249.1 474.3,250.8 474.8,251.6 476.9,253.9 479.1,256 481.2,258 481.8,258.6 484.1,260.5 487.2,263 490.3,265.3 490.5,265.5"/>
<polyline points="468.9,242.1 469.1,242.3 470.6,244 472.1,246 473.7,248.1 474.8,249.7 475.3,250.4 477.4,252.6 479.6,254.6 481.8,256.6 482.4,257.1 484.6,258.9 487.7,261.3 490.9,263.6 491,263.7"/>
<polyline points="469.4,241.8 471,243.4 472.5,245.2 474.1,247.2 475.3,248.7 475.8,249.3 477.9,251.4 480.1,253.3 482.3,255.2 482.9,255.7 485.1,257.5 488.2,259.8 491.3,262 491.5,262.1"/>
<polyline points="471.3,242.9 472.9,244.6 474.5,246.4 475.7,247.7 476.2,248.3 478.4,250.3 480.6,252.1 482.8,253.9 483.4,254.4 485.6,256.1 488.7,258.4 491.8,260.5 492,260.6"/>
<polyline points="473.2,244 474.8,245.7 476.1,246.9 476.6,247.4 478.8,249.3 481,251.1 483.3,252.8 483.9,253.3 486.1,254.9 489.1,257.1 492.2,259.1 492.4,259.2"/>
<polyline points="473.4,243.5 475.1,245 476.4,246.2 477,246.7 479.2,248.5 481.4,250.1 483.7,251.8 484.3,252.2 486.5,253.8 489.5,255.9 492.6,257.8 492.8,258"/>
<polyline points="475.4,244.5 476.7,245.5 477.3,246 479.5,247.6 481.8,249.2 484,250.8 484.7,251.2 486.9,252.8 489.9,254.8 492.9,256.6 493.1,256.8"/>
<polyline points="464.1,381.2 465.2,381 465.9,380.9 468.3,380.6 470.7,380.6 471.3,380.6 473.1,380.5"/>
<polyline points="464.9,377.5 466,377.3 466.7,377.2 469.1,376.9 471.5,376.9 472,376.9 473.9,376.9 476.3,377.5 478.7,378.3 480.5,378.8 481,379 483.4,379.8 485.8,380.6"/>
<polyline points="465.8,373.8 466.8,373.7 467.6,373.5 470,373.3 472.4,373.2 472.9,373.2 474.7,373.2 477.1,373.8 479.5,374.6 481.3,375.2 481.8,375.4 484.2,376.2 486.6,377 489,377.8 489.7,378 491.3,378.6 493.7,379.4 496.1,380.2 498,380.9 498.5,381"/>
<polyline points="466.6,370.1 467.7,370 468.5,369.8 470.8,369.6 473.2,369.6 473.7,369.6 475.6,369.6 478,370.2 480.3,371 482.1,371.6 482.7,371.8 485.1,372.6 487.4,373.4 489.8,374.2 490.5,374.5 492.2,375 494.5,375.8 496.9,376.7 498.9,377.3 499.3,377.5 501.6,378.3 504,379.1 506.3,379.9 507.2,380.2 508.7,380.7"/>
<polyline points="467.5,366.4 468.5,366.3 469.3,366.1 471.7,365.9 474.1,365.9 474.6,365.9 476.5,365.9 478.9,366.5 481.2,367.4 483,368 483.6,368.2 485.9,369 488.3,369.8 490.7,370.6 491.4,370.9 493.1,371.5 495.4,372.3 497.8,373.1 499.7,373.8 500.2,373.9 502.5,374.8 504.8,375.6 507.2,376.4 508,376.7 509.5,377.2 511.9,378 514.2,378.9 516.3,379.6 516.6,379.7 518.9,379.2"/>
<polyline points="468.4,362.7 469.4,362.6 470.2,362.5 472.6,362.2 475,362.2 475.5,362.2 477.4,362.3 479.8,362.9 482.1,363.7 483.9,364.4 484.5,364.6 486.8,365.4 489.2,366.2 491.6,367.1 492.3,367.3 494,367.9 496.3,368.7 498.7,369.6 500.7,370.3 501.1,370.4 503.4,371.2 505.8,372.1 508.1,372.9 508.9,373.2 510.4,373.7 512.8,374.6 515.1,375.4 517.2,376.1 517.4,376.2 519.8,375.8 521.8,374.9 522.2,375 524.5,375.8 526,376.4 526.8,376.7 529.2,377.5 530.1,377.8"/>
<polyline points="469.3,359 470.4,358.9 471.1,358.8 473.5,358.5 475.9,358.6 476.5,358.6 478.3,358.6 480.7,359.3 483,360.1 484.8,360.7 485.4,360.9 487.8,361.8 490.1,362.6 492.5,363.5 493.2,363.7 494.9,364.3 497.3,365.2 499.6,366 501.6,366.7 502,366.9 504.3,367.7 506.7,368.6 509,369.4 509.9,369.7 511.4,370.2 513.7,371.1 516,371.9 518.1,372.7 518.3,372.8 520.7,372.3 522.7,371.5 523.1,371.6 525.4,372.4 526.9,373 527.7,373.3 530.1,374.1 531,374.4 532.4,375 534.7,375.8 535.1,375.9 537,376.6 539.2,377.4 539.4,377.5"/>
<polyline points="470.2,355.3 471.3,355.2 472.1,355.1 474.5,354.9 476.8,354.9 477.4,354.9 479.2,355 481.6,355.6 483.9,356.5 485.7,357.1 486.3,357.3 488.7,358.2 491.1,359 493.5,359.9 494.1,360.2 495.8,360.8 498.2,361.6 500.6,362.5 502.5,363.2 502.9,363.3 505.3,364.2 507.6,365 510,365.9 510.8,366.2 512.3,366.8 514.6,367.6 516.9,368.5 519,369.2 519.3,369.3 521.6,368.9 523.7,368 524,368.1 526.3,369 527.8,369.5 528.7,369.9 531,370.7 531.9,371.1 533.3,371.6 535.6,372.4 536,372.6 537.9,373.3 540.1,374.1 540.3,374.2 542.7,374.8 544.4,375.1 545.1,375.2 547.5,375.6 548.5,375.8 549.8,376"/>
<polyline points="471.2,351.6 472.2,351.5 473,351.4 475.4,351.2 477.8,351.2 478.3,351.3 480.2,351.3 482.5,352 484.9,352.8 486.6,353.5 487.2,353.7 489.6,354.6 492,355.5 494.4,356.3 495.1,356.6 496.8,357.2 499.2,358.1 501.5,358.9 503.5,359.6 503.9,359.8 506.3,360.7 508.6,361.5 510.9,362.4 511.8,362.7 513.2,363.3 515.6,364.1 517.9,365 520,365.8 520.2,365.9 522.6,365.4 524.7,364.6 525,364.7 527.3,365.6 528.8,366.1 529.6,366.5 532,367.3 532.9,367.7 534.3,368.2 536.6,369.1 537,369.2 538.9,369.9 541.1,370.7 541.2,370.8 543.7,371.5 545.5,371.8 546.2,371.9 548.7,372.3 549.9,372.5 551.3,372.7 554.1,372.8 554.7,372.8 556.8,372.7 559.4,372.7"/>
<polyline points="472.1,347.9 473.1,347.8 473.9,347.7 476.3,347.5 478.7,347.6 479.3,347.6 481.1,347.6 483.5,348.3 485.8,349.2 487.6,349.9 488.2,350.1 490.6,351 493,351.9 495.4,352.7 496.1,353 497.7,353.6 500.1,354.5 502.5,355.4 504.5,356.1 504.9,356.3 507.2,357.1 509.6,358 511.9,358.9 512.7,359.2 514.2,359.8 516.5,360.7 518.9,361.6 520.9,362.3 521.2,362.4 523.6,362 525.7,361.2 526,361.3 528.3,362.2 529.8,362.7 530.6,363.1 532.9,363.9 533.9,364.3 535.3,364.8 537.6,365.7 537.9,365.9 539.9,366.6 542,367.4 542.2,367.5 544.7,368.2 546.5,368.5 547.3,368.6 549.9,369 551.1,369.2 552.7,369.4 555.7,369.5 556.4,369.5 558.8,369.5 562,369.4"/>
<polyline points="473,344.2 474.1,344.1 474.9,344 477.3,343.8 479.7,343.9 480.2,343.9 482.1,344 484.4,344.7 486.8,345.6 488.5,346.3 489.1,346.5 491.5,347.4 493.9,348.3 496.3,349.2 497,349.4 498.7,350.1 501.1,350.9 503.5,351.8 505.5,352.6 505.9,352.7 508.2,353.6 510.5,354.5 512.9,355.4 513.7,355.7 515.2,356.3 517.5,357.2 519.8,358.1 521.9,358.9 522.1,359 524.5,358.6 526.6,357.7 527,357.9 529.3,358.8 530.8,359.3 531.6,359.7 533.9,360.6 534.9,360.9 536.3,361.4 538.6,362.3 538.9,362.5 540.9,363.2 543,364.1 543.2,364.1 545.7,364.9 547.6,365.1 548.4,365.3 551.1,365.7 552.3,365.9 554,366.1 557.1,366.2 557.9,366.2 560.4,366.2 563.9,366.2"/>
<polyline points="474,340.5 475,340.4 475.8,340.3 478.3,340.1 480.6,340.2 481.2,340.3 483,340.3 485.4,341 487.7,342 489.5,342.6 490.1,342.9 492.5,343.8 494.9,344.7 497.3,345.6 498,345.8 499.7,346.5 502.1,347.4 504.5,348.3 506.4,349 506.8,349.2 509.2,350.1 511.5,351 513.8,351.9 514.7,352.2 516.2,352.8 518.5,353.7 520.8,354.6 522.9,355.4 523.1,355.5 525.5,355.1 527.7,354.3 528,354.4 530.3,355.4 531.8,355.9 532.6,356.3 534.9,357.2 535.9,357.5 537.3,358.1 539.6,359 539.9,359.1 541.9,359.9 544,360.7 544.2,360.8 546.8,361.5 548.7,361.8 549.5,362 552.2,362.4 553.5,362.6 555.2,362.8 558.4,362.9 559.2,362.9 561.8,362.9 565.4,362.9"/>
<polyline points="474.9,336.8 476,336.7 476.8,336.6 479.2,336.5 481.6,336.6 482.1,336.6 484,336.7 486.4,337.4 488.7,338.3 490.4,339 491,339.2 493.4,340.2 495.9,341.1 498.3,342 499,342.3 500.7,342.9 503.1,343.8 505.5,344.7 507.4,345.5 507.8,345.7 510.2,346.6 512.5,347.5 514.8,348.4 515.7,348.8 517.2,349.3 519.5,350.3 521.8,351.2 523.9,352 524.1,352.1 526.5,351.7 528.7,350.9 529,351 531.3,351.9 532.8,352.5 533.6,352.9 536,353.8 536.9,354.1 538.3,354.7 540.6,355.6 541,355.8 542.9,356.5 545,357.4 545.2,357.4 547.8,358.2 549.7,358.5 550.6,358.6 553.3,359.1 554.6,359.3 556.3,359.5 559.7,359.7 560.5,359.7 563.1,359.7 566.8,359.7"/>
<polyline points="475.9,333.1 477,333 477.8,332.9 480.2,332.8 482.6,332.9 483.1,332.9 485,333 487.3,333.8 489.7,334.7 491.4,335.4 492,335.6 494.4,336.6 496.8,337.5 499.2,338.4 500,338.7 501.7,339.3 504.1,340.3 506.5,341.2 508.4,342 508.8,342.1 511.2,343.1 513.5,344 515.8,344.9 516.7,345.3 518.1,345.9 520.5,346.8 522.8,347.7 524.8,348.5 525.1,348.6 527.5,348.3 529.7,347.5 530,347.6 532.3,348.5 533.8,349.1 534.7,349.5 537,350.4 537.9,350.8 539.3,351.3 541.6,352.2 542,352.4 543.9,353.2 546.1,354 546.2,354.1 548.8,354.9 550.8,355.2 551.6,355.3 554.4,355.8 555.7,356 557.5,356.2 560.8,356.4 561.6,356.4 564.4,356.4 568,356.4"/>
<polyline points="476.9,329.4 477.9,329.3 478.7,329.2 481.2,329.1 483.6,329.2 484.1,329.3 486,329.4 488.3,330.1 490.6,331.1 492.4,331.8 493,332 495.4,332.9 497.8,333.9 500.2,334.8 500.9,335.1 502.6,335.8 505.1,336.7 507.5,337.7 509.4,338.4 509.9,338.6 512.2,339.5 514.5,340.5 516.8,341.4 517.7,341.8 519.2,342.4 521.5,343.3 523.8,344.2 525.8,345.1 526.1,345.2 528.5,344.8 530.7,344 531,344.2 533.4,345.1 534.8,345.7 535.7,346.1 538,347 538.9,347.4 540.3,347.9 542.6,348.9 543,349 545,349.8 547.1,350.7 547.3,350.8 549.9,351.5 551.8,351.9 552.7,352 555.5,352.5 556.8,352.7 558.6,353 562,353.1 562.8,353.1 565.5,353.1 569.1,353.2"/>
<polyline points="477.8,325.7 478.9,325.6 479.7,325.5 482.1,325.4 484.5,325.6 485.1,325.6 486.9,325.7 489.3,326.5 491.6,327.4 493.4,328.2 494,328.4 496.4,329.3 498.8,330.3 501.2,331.2 501.9,331.5 503.6,332.2 506.1,333.2 508.5,334.1 510.5,334.9 510.9,335.1 513.2,336 515.5,337 517.9,337.9 518.7,338.3 520.2,338.9 522.5,339.8 524.8,340.8 526.8,341.6 527.1,341.7 529.6,341.4 531.7,340.6 532.1,340.7 534.4,341.7 535.9,342.3 536.7,342.7 539.1,343.6 540,344 541.4,344.6 543.7,345.5 544.1,345.7 546,346.5 548.1,347.4 548.3,347.4 550.9,348.2 552.9,348.5 553.7,348.7 556.6,349.2 557.9,349.4 559.6,349.7 563.1,349.8 563.9,349.8 566.6,349.9 570.2,349.9"/>
<polyline points="478.8,322 479.9,321.9 480.7,321.9 483.1,321.8 485.5,321.9 486.1,321.9 487.9,322.1 490.3,322.8 492.6,323.8 494.3,324.5 494.9,324.8 497.4,325.7 499.8,326.7 502.2,327.7 502.9,328 504.7,328.6 507.1,329.6 509.5,330.6 511.5,331.4 511.9,331.5 514.2,332.5 516.6,333.5 518.9,334.4 519.7,334.8 521.2,335.4 523.5,336.4 525.8,337.3 527.9,338.2 528.1,338.3 530.6,337.9 532.8,337.2 533.1,337.3 535.4,338.3 536.9,338.9 537.8,339.3 540.1,340.2 541,340.6 542.4,341.2 544.7,342.2 545.1,342.3 547,343.1 549.2,344 549.3,344.1 552,344.9 554,345.2 554.8,345.4 557.6,345.9 558.9,346.1 560.7,346.4 564.1,346.5 564.9,346.5 567.6,346.6 571.2,346.6"/>
<polyline points="479.8,318.3 480.9,318.2 481.7,318.2 484.1,318.1 486.5,318.2 487,318.3 488.9,318.4 491.3,319.2 493.6,320.2 495.3,320.9 495.9,321.2 498.4,322.1 500.8,323.1 503.2,324.1 503.9,324.4 505.7,325.1 508.1,326 510.5,327 512.5,327.8 512.9,328 515.3,329 517.6,330 519.9,330.9 520.7,331.3 522.2,331.9 524.5,332.9 526.8,333.9 528.9,334.7 529.1,334.8 531.6,334.5 533.8,333.8 534.1,333.9 536.5,334.9 537.9,335.5 538.8,335.9 541.1,336.8 542.1,337.2 543.5,337.8 545.8,338.8 546.1,338.9 548.1,339.8 550.2,340.7 550.4,340.7 553,341.6 555,341.9 555.9,342.1 558.7,342.6 560,342.8 561.7,343.1 565.1,343.3 565.9,343.3 568.6,343.3 572.2,343.4"/>
<polyline points="480.8,314.6 481.9,314.5 482.7,314.5 485.1,314.4 487.5,314.6 488,314.6 489.9,314.8 492.3,315.6 494.6,316.5 496.3,317.3 496.9,317.5 499.4,318.5 501.8,319.5 504.2,320.5 505,320.8 506.7,321.5 509.1,322.5 511.5,323.5 513.5,324.3 513.9,324.5 516.3,325.5 518.6,326.4 520.9,327.4 521.7,327.8 523.2,328.4 525.5,329.4 527.8,330.4 529.9,331.3 530.1,331.4 532.6,331.1 534.9,330.3 535.2,330.5 537.5,331.5 539,332.1 539.9,332.5 542.2,333.4 543.1,333.8 544.5,334.4 546.8,335.4 547.2,335.6 549.1,336.4 551.3,337.3 551.4,337.4 554.1,338.2 556.1,338.6 556.9,338.7 559.7,339.3 561,339.5 562.8,339.8 566.1,340 566.9,340 569.6,340.1 573.1,340.1"/>
<polyline points="481.8,310.9 482.8,310.9 483.7,310.8 486.1,310.7 488.5,310.9 489,311 490.9,311.1 493.3,311.9 495.6,312.9 497.3,313.7 497.9,313.9 500.4,314.9 502.8,315.9 505.3,316.9 506,317.2 507.7,317.9 510.1,318.9 512.6,319.9 514.6,320.8 515,320.9 517.3,321.9 519.6,322.9 521.9,323.9 522.8,324.3 524.2,324.9 526.5,325.9 528.8,326.9 530.9,327.8 531.1,327.9 533.7,327.6 535.9,326.9 536.3,327.1 538.6,328.1 540,328.7 540.9,329.1 543.2,330.1 544.2,330.5 545.6,331.1 547.9,332.1 548.2,332.2 550.2,333.1 552.3,334 552.5,334.1 555.1,334.9 557.1,335.3 557.9,335.4 560.7,336 562.1,336.2 563.8,336.5 567.1,336.7 567.9,336.7 570.5,336.8 574,336.9"/>
<polyline points="482.8,307.2 483.8,307.2 484.7,307.1 487.1,307 489.5,307.2 490,307.3 491.9,307.5 494.3,308.3 496.6,309.3 498.3,310.1 498.9,310.3 501.4,311.3 503.8,312.3 506.3,313.3 507,313.6 508.7,314.4 511.2,315.4 513.6,316.4 515.6,317.2 516,317.4 518.4,318.4 520.7,319.4 523,320.4 523.8,320.8 525.3,321.5 527.6,322.5 529.9,323.5 531.9,324.4 532.2,324.5 534.7,324.2 537,323.5 537.3,323.6 539.6,324.6 541.1,325.3 542,325.7 544.3,326.7 545.2,327.1 546.6,327.7 548.9,328.7 549.3,328.9 551.2,329.7 553.4,330.7 553.6,330.7 556.2,331.6 558.1,331.9 559,332.1 561.8,332.7 563.1,332.9 564.8,333.2 568.1,333.4 568.9,333.4 571.4,333.5 574.8,333.6"/>
<polyline points="483.8,303.5 484.8,303.5 485.7,303.4 488.1,303.4 490.5,303.6 491.1,303.6 493,303.8 495.3,304.6 497.6,305.7 499.3,306.4 499.9,306.7 502.4,307.7 504.8,308.7 507.3,309.8 508,310.1 509.7,310.8 512.2,311.8 514.6,312.8 516.6,313.7 517.1,313.9 519.4,314.9 521.7,315.9 524,316.9 524.8,317.3 526.3,318 528.6,319 530.9,320 533,320.9 533.2,321 535.7,320.8 538,320.1 538.4,320.2 540.7,321.2 542.2,321.9 543,322.3 545.4,323.3 546.3,323.7 547.7,324.3 550,325.3 550.4,325.5 552.3,326.4 554.5,327.3 554.6,327.4 557.3,328.2 559.2,328.6 560,328.8 562.8,329.4 564.1,329.6 565.8,329.9 569,330.1 569.8,330.2 572.3,330.3 575.6,330.4"/>
<polyline points="484.8,299.8 485.8,299.8 486.7,299.7 489.1,299.7 491.5,299.9 492.1,300 494,300.1 496.3,301 498.6,302 500.3,302.8 500.9,303.1 503.4,304.1 505.9,305.1 508.3,306.2 509,306.5 510.8,307.2 513.2,308.3 515.7,309.3 517.7,310.2 518.1,310.3 520.5,311.4 522.8,312.4 525.1,313.4 525.9,313.8 527.4,314.5 529.6,315.5 531.9,316.6 534,317.5 534.2,317.6 536.8,317.3 539.1,316.6 539.4,316.8 541.8,317.8 543.2,318.5 544.1,318.9 546.4,319.9 547.4,320.3 548.7,320.9 551.1,322 551.4,322.1 553.4,323 555.5,324 555.7,324 558.3,324.9 560.2,325.3 561.1,325.5 563.8,326 565.1,326.3 566.8,326.6 569.9,326.9 570.7,326.9 573.2,327 576.4,327.1"/>
<polyline points="485.8,296.1 486.9,296.1 487.7,296 490.1,296 492.5,296.3 493.1,296.3 495,296.5 497.3,297.3 499.6,298.4 501.3,299.2 501.9,299.4 504.4,300.5 506.9,301.5 509.4,302.6 510.1,302.9 511.8,303.6 514.3,304.7 516.7,305.7 518.7,306.6 519.1,306.8 521.5,307.8 523.8,308.9 526.1,309.9 526.9,310.3 528.4,311 530.7,312 533,313.1 535,314 535.2,314.1 537.8,313.9 540.2,313.2 540.5,313.4 542.8,314.4 544.3,315.1 545.2,315.5 547.5,316.5 548.4,316.9 549.8,317.6 552.1,318.6 552.5,318.8 554.4,319.7 556.6,320.6 556.8,320.7 559.4,321.6 561.3,322 562.1,322.2 564.8,322.7 566.1,323 567.7,323.3 570.9,323.6 571.6,323.6 574,323.7 577.2,323.9"/>
<polyline points="486.8,292.4 487.9,292.4 488.7,292.3 491.2,292.3 493.6,292.6 494.1,292.6 496,292.8 498.3,293.7 500.6,294.8 502.4,295.6 503,295.8 505.4,296.9 507.9,298 510.4,299 511.1,299.3 512.8,300.1 515.3,301.1 517.8,302.2 519.8,303.1 520.2,303.3 522.6,304.3 524.9,305.4 527.2,306.5 528,306.8 529.4,307.5 531.7,308.6 534,309.6 536.1,310.6 536.3,310.7 538.9,310.5 541.2,309.8 541.6,309.9 543.9,311 545.4,311.7 546.2,312.1 548.6,313.1 549.5,313.5 550.9,314.2 553.2,315.2 553.6,315.4 555.5,316.3 557.7,317.3 557.8,317.4 560.4,318.3 562.3,318.7 563.1,318.8 565.8,319.4 567.1,319.7 568.7,320 571.8,320.3 572.5,320.3 574.9,320.4 578,320.6"/>
<polyline points="487.8,288.7 488.9,288.7 489.7,288.6 492.2,288.7 494.6,288.9 495.1,289 497,289.2 499.4,290.1 501.7,291.1 503.4,291.9 504,292.2 506.5,293.3 508.9,294.4 511.4,295.4 512.1,295.7 513.9,296.5 516.3,297.6 518.8,298.7 520.8,299.5 521.3,299.7 523.6,300.8 525.9,301.9 528.2,303 529,303.3 530.5,304 532.8,305.1 535.1,306.2 537.1,307.1 537.3,307.3 539.9,307 542.3,306.4 542.6,306.5 545,307.6 546.5,308.3 547.3,308.6 549.7,309.7 550.6,310.1 552,310.8 554.3,311.9 554.7,312 556.6,312.9 558.8,313.9 558.9,314 561.5,314.9 563.4,315.3 564.2,315.5 566.8,316.1 568.1,316.4 569.6,316.7 572.6,317 573.3,317.1 575.7,317.2 578.7,317.3"/>
<polyline points="488.8,285 489.9,285 490.7,285 493.2,285 495.6,285.3 496.1,285.3 498.1,285.5 500.4,286.4 502.7,287.5 504.4,288.3 505,288.6 507.5,289.7 510,290.8 512.5,291.9 513.2,292.2 514.9,292.9 517.4,294 519.9,295.1 521.9,296 522.3,296.2 524.7,297.3 527,298.4 529.3,299.5 530.1,299.8 531.5,300.5 533.8,301.6 536.1,302.7 538.1,303.7 538.4,303.8 541,303.6 543.4,302.9 543.7,303.1 546.1,304.2 547.5,304.8 548.4,305.2 550.7,306.3 551.7,306.8 553,307.4 555.4,308.5 555.7,308.7 557.7,309.6 559.8,310.6 560,310.7 562.5,311.6 564.4,312 565.2,312.2 567.8,312.8 569.1,313.1 570.6,313.4 573.5,313.7 574.2,313.8 576.5,313.9 579.4,314.1"/>
<polyline points="489.8,281.3 490.9,281.3 491.7,281.3 494.2,281.3 496.6,281.6 497.2,281.6 499.1,281.9 501.4,282.8 503.7,283.9 505.4,284.7 506,285 508.5,286.1 511,287.2 513.5,288.3 514.2,288.6 516,289.4 518.4,290.5 520.9,291.6 523,292.5 523.4,292.7 525.7,293.8 528,294.9 530.3,296 531.1,296.4 532.6,297.1 534.9,298.2 537.1,299.3 539.2,300.2 539.4,300.4 542.1,300.1 544.5,299.5 544.8,299.7 547.1,300.7 548.6,301.4 549.5,301.8 551.8,302.9 552.7,303.4 554.1,304 556.4,305.1 556.8,305.3 558.8,306.2 560.9,307.3 561.1,307.3 563.6,308.3 565.4,308.7 566.2,308.9 568.8,309.5 570,309.8 571.5,310.2 574.4,310.5 575.1,310.5 577.3,310.6 580.1,310.8"/>
<polyline points="490.8,277.6 491.9,277.6 492.8,277.6 495.3,277.6 497.7,277.9 498.2,278 500.1,278.2 502.5,279.1 504.7,280.2 506.4,281.1 507.1,281.4 509.5,282.5 512,283.6 514.5,284.7 515.3,285 517,285.8 519.5,286.9 522,288 524,288.9 524.4,289.1 526.8,290.2 529.1,291.4 531.4,292.5 532.2,292.9 533.6,293.6 535.9,294.7 538.2,295.8 540.2,296.8 540.5,296.9 543.1,296.7 545.6,296.1 545.9,296.2 548.2,297.3 549.7,298 550.6,298.4 552.9,299.6 553.8,300 555.2,300.7 557.5,301.8 557.9,302 559.8,302.9 562,303.9 562.2,304 564.7,304.9 566.5,305.4 567.3,305.6 569.8,306.2 571,306.5 572.5,306.9 575.2,307.2 575.9,307.2 578,307.4 580.8,307.6"/>
<polyline points="491.9,273.9 493,273.9 493.8,273.9 496.3,273.9 498.7,274.3 499.2,274.3 501.2,274.6 503.5,275.5 505.8,276.6 507.5,277.5 508.1,277.7 510.6,278.9 513.1,280 515.6,281.1 516.3,281.4 518.1,282.2 520.6,283.4 523,284.5 525.1,285.4 525.5,285.6 527.9,286.7 530.2,287.8 532.4,289 533.3,289.4 534.7,290.1 537,291.2 539.3,292.3 541.3,293.3 541.5,293.5 544.2,293.3 546.6,292.6 547,292.8 549.3,293.9 550.8,294.6 551.7,295 554,296.2 554.9,296.6 556.3,297.3 558.6,298.4 559,298.6 560.9,299.5 563.1,300.6 563.3,300.7 565.7,301.6 567.5,302.1 568.3,302.3 570.8,302.9 572,303.2 573.4,303.6 576.1,303.9 576.7,303.9 578.8,304.1 581.5,304.3"/>
<polyline points="492.9,270.2 494,270.2 494.8,270.2 497.3,270.3 499.7,270.6 500.3,270.7 502.2,270.9 504.5,271.8 506.8,273 508.5,273.8 509.1,274.1 511.6,275.3 514.1,276.4 516.6,277.5 517.4,277.9 519.1,278.7 521.6,279.8 524.1,280.9 526.2,281.9 526.6,282.1 528.9,283.2 531.2,284.3 533.5,285.5 534.3,285.9 535.8,286.6 538,287.7 540.3,288.9 542.3,289.9 542.6,290 545.3,289.8 547.7,289.2 548,289.4 550.4,290.5 551.9,291.2 552.7,291.6 555.1,292.8 556,293.2 557.4,293.9 559.7,295.1 560.1,295.2 562,296.2 564.2,297.2 564.3,297.3 566.8,298.3 568.6,298.7 569.3,298.9 571.8,299.6 572.9,299.9 574.3,300.3 576.9,300.6 577.5,300.7 579.5,300.8 582.1,301.1"/>
<polyline points="493.9,266.5 495,266.5 495.9,266.5 498.4,266.6 500.8,266.9 501.3,267 503.3,267.3 505.6,268.2 507.8,269.4 509.5,270.2 510.1,270.5 512.7,271.6 515.2,272.8 517.7,273.9 518.4,274.3 520.2,275.1 522.7,276.2 525.2,277.4 527.2,278.3 527.6,278.5 530,279.7 532.3,280.8 534.6,282 535.4,282.4 536.8,283.1 539.1,284.3 541.4,285.4 543.4,286.4 543.6,286.6 546.3,286.4 548.8,285.8 549.1,286 551.5,287.1 553,287.8 553.8,288.2 556.2,289.4 557.1,289.8 558.5,290.5 560.8,291.7 561.2,291.9 563.1,292.8 565.3,293.9 565.4,294 567.9,295 569.6,295.4 570.3,295.6 572.8,296.3 573.9,296.6 575.2,297 577.7,297.3 578.3,297.4 580.3,297.6 582.8,297.8"/>
<polyline points="495,262.8 496.1,262.8 496.9,262.8 499.4,262.9 501.8,263.3 502.4,263.3 504.3,263.6 506.6,264.6 508.9,265.7 510.6,266.6 511.2,266.9 513.7,268 516.2,269.2 518.7,270.4 519.5,270.7 521.2,271.5 523.7,272.7 526.2,273.8 528.3,274.8 528.7,275 531.1,276.2 533.4,277.3 535.6,278.5 536.5,278.9 537.9,279.6 540.2,280.8 542.4,281.9 544.5,283 544.7,283.1 547.4,283 549.9,282.4 550.2,282.5 552.6,283.7 554.1,284.4 554.9,284.8 557.3,286 558.2,286.5 559.6,287.2 561.9,288.3 562.3,288.5 564.2,289.5 566.4,290.6 566.5,290.6 568.9,291.6 570.6,292.1 571.4,292.3 573.8,293 574.9,293.3 576.1,293.7 578.6,294.1 579.1,294.1 581,294.3 583.4,294.6"/>
<polyline points="496,259.1 497.1,259.1 497.9,259.1"/>
<polyline points="534.4,273.8 536.7,275 537.5,275.4 539,276.1 541.2,277.3 543.5,278.5 545.5,279.5 545.7,279.7 548.5,279.5 551,278.9"/>
<polyline points="425.5,251.3 429.2,247 436.3,242.3 440.5,240.8 448.5,238.3 456.1,237.8 463.1,238.3 472.1,242" stroke-opacity="0.83"/>
<polyline points="426,252.7 429.7,248.4 436.8,243.7 441,242.2 449,239.7 457.2,239.2 464.2,239.7 473.2,243.4" stroke-opacity="0.76"/>
<polyline points="426.5,254.1 430.2,249.8 437.3,245.1 441.5,243.6 449.5,241.1 458.3,240.6 465.3,241.1 474.3,244.8" stroke-opacity="0.69"/>
<polyline points="427,255.4 430.7,251.1 437.8,246.4 442,244.9 450,242.4 459.4,241.9 466.4,242.4 475.4,246.1" stroke-opacity="0.62"/>
<polyline points="427.5,256.8 431.2,252.4 438.3,247.8 442.5,246.2 450.5,243.8 460.5,243.2 467.5,243.8" stroke-opacity="0.55"/>
<polyline points="428,258.1 431.7,253.8 438.8,249.1 443,247.6 451,245.1 461.6,244.6 468.6,245.1" stroke-opacity="0.48"/>
<polyline points="428.5,259.4 432.2,255.1 439.3,250.4 443.5,248.9 451.5,246.4 462.7,245.9 469.7,246.4" stroke-opacity="0.41"/>
</g>
<polygon points="330.4,467 332.9,464.8 335.5,462.6 336.6,461.6 338,460.4 340.6,458.2 341.8,457.1 343.1,456 345.7,453.8 347,452.6 348.2,451.6 350.8,449.4 353.2,447.3 353.3,447.2 355.9,445 358.4,442.8 358.4,442.8 361,440.6 363.5,438.4 364.6,437.4 366,436.2 368.6,434 369.8,432.9 371.1,431.8 373.7,429.6 376,427.6 376.2,427.4 378.8,425.2 381.3,423 382.2,422.2 383.9,420.6 386.4,417.1 387.4,415.7 389,413.5 391.5,409.9 393.6,407.7 394.1,407.3 396.6,404.8 399.1,402.3 399.9,401.5 401.7,399.8 404.2,397.4 406.8,395.3 407.1,395 409.3,393.2 411.9,391.1 414.4,389 414.4,389 417,386.8 419.5,384.7 422.1,382.5 424.6,380.3 425.6,379.5 427.2,379.3 429.7,379 432.2,378.6 434.4,378.7 434.8,378.7 437.3,379.1 439.9,379.4 442.4,379.8 444.3,380.1 445,380.4 447.5,381.3 450.1,382.3 452.6,383.2 453.3,383.4 455.2,383.9 457.7,384.6 460.2,385.3 460.4,385.3 461.7,385.7 462.8,385.2 463.4,384.9 464.5,384.4 465.3,384 467.9,382.9 470.4,382.1 471,381.9 473,381.3 475.5,381.1 478.1,381.1 480,381.1 480.6,381.1 483.2,381.1 485.7,381.1 488.3,381.1 489,381.1 490.8,381.1 493.3,381.1 495.9,381.1 498,381.1 498.4,381.1 501,381.1 503.5,381.1 506.1,381.1 507,381.1 508.6,381.1 511.2,381.1 513.7,381.1 516,381.1 516.3,381.1 518.8,379.8 521,378.2 521.4,378.2 523.9,378.2 525.5,378.2 526.4,378.2 529,378.2 530,378.2 531.5,378.2 534.1,378.2 534.5,378.2 536.6,378.2 539,378.2 539.2,378.2 541.7,378 543.5,377.7 544.3,377.6 546.8,377.1 548,376.9 549.4,376.6 551.9,375.8 552.5,375.6 554.5,374.9 557,374 557,374 562.7,368.3 565.6,362.6 567.8,356.9 569.8,351.1 571.6,345.4 573.2,339.7 574.7,334 576.2,328.3 577.5,322.6 578.8,316.9 580,311.1 581.2,305.4 582.4,299.7 583.5,294 583.5,294 570.4,289.3 558.6,283.4 546.7,276.4 529,272.5 519,268.5 510,264.7 499.6,259.3 489,253 480,247 471,240.7 462,237 455,236.5 448,237 440,239.5 435.8,241 428.7,245.7 425,250 422.5,253.5 419.2,255.7 409.8,260.5 401.5,266.4 395.5,273 389.6,282.4 387.6,290 382.3,304 373.4,329 362.7,361.2 352,396.8 341.4,432.3 330.7,466" fill="none" stroke="#101000" stroke-width="0.9" stroke-linejoin="round"/>
<g stroke="#262626" stroke-width="0.85" fill="none">
<path d="M310.6 243H316.1M313.5 249.5H316.5M311.4 255.9H316.9M314.3 262.3H317.3M312.2 268.7H317.7M315.1 275H318.1M313 281.3H318.5M315.9 287.6H318.9M313.8 293.9H319.3M316.7 300.1H319.7M314.5 306.3H320M317.4 312.5H320.4M315.3 318.6H320.8M318.2 324.7H321.2M316 330.8H321.5M318.9 336.8H321.9M316.8 342.8H322.3M319.7 348.8H322.7M317.5 354.8H323M320.4 360.7H323.4M318.3 366.6H323.8M321.1 372.5H324.1M319 378.3H324.5M321.8 384.1H324.8M319.7 389.9H325.2M322.6 395.6H325.6M320.4 401.3H325.9M323.3 407H326.3M321.1 412.7H326.6M324 418.3H327M321.8 423.9H327.3M324.6 429.5H327.6M322.5 435H328M325.3 440.5H328.3M323.2 446H328.7M326 451.4H329M323.8 456.8H329.3M583.9 238.5h4.5M583.8 243.6h2.5M583.6 248.7h4.5M583.4 253.7h2.5M583.2 258.7h4.5M583 263.7h2.5M582.8 268.7h4.5M582.7 273.6h2.5M582.5 278.6h4.5M582.3 283.5h2.5M582.1 288.4h4.5M581.9 293.2h2.5M581.8 298.1h4.5M581.6 302.9h2.5M581.4 307.7h4.5M581.2 312.5h2.5M581 317.2h4.5M580.9 322h2.5M580.7 326.7h4.5M580.5 331.4h2.5M580.4 336h4.5M580.2 340.7h2.5M580 345.3h4.5M579.8 349.9h2.5M579.7 354.5h4.5M579.5 359.1h2.5M579.3 363.6h4.5M579.2 368.1h2.5M579 372.6h4.5M578.8 377.1h2.5M578.7 381.5h4.5M578.5 385.9h2.5M578.4 390.3h4.5M578.2 394.7h2.5M578 399.1h4.5M577.9 403.4h2.5M577.7 407.7h4.5M317.5 240.9v-5M321.5 240.7v-4M325.5 240.5v-5M329.3 240.3v-4M333 240.1v-5M336.5 240v-4M340 239.8v-5M343.4 239.6v-4M346.6 239.5v-5M349.8 239.3v-4M352.9 239.2v-5M355.8 239v-4M358.7 238.9v-5M361.5 238.7v-4M364.2 238.6v-5M366.8 238.5v-4M369.4 238.4v-5M371.9 238.2v-4M374.3 238.1v-5M376.6 238v-4M378.8 237.9v-5M381 237.8v-4M383.1 237.7v-5M385.2 237.6v-4M387.2 237.5v-5M389.1 237.4v-4M391 237.3v-5M392.8 237.2v-4M394.6 237.1v-5M396.3 237v-4M397.9 237v-5M399.5 236.9v-4M401.1 236.8v-5M402.6 236.7v-4M404.1 236.7v-5M405.5 236.6v-4M406.9 236.5v-5M408.2 236.5v-4M409.5 236.4v-5M417.4 236.6v-3.2M422.8 236.6v-5M429.2 236.6v-3.2M435.6 236.6v-5M441.8 236.6v-3.2M448 236.6v-5M454.4 236.6v-3.2M460.8 236.6v-5M467.2 236.6v-3.2M473.7 236.6v-5M480.2 236.6v-3.2M486.7 236.6v-5M493.5 236.6v-3.2M500.3 236.6v-5M507.3 236.6v-3.2M514.3 236.6v-5M521.3 236.6v-3.2M528.4 236.6v-5M535.5 236.6v-3.2M542.7 236.6v-5M549.9 236.6v-3.2M557 236.6v-5M564.1 236.6v-3.2M571.2 236.6v-5M578.4 236.6v-3.2M330 467.5l0.5 4.3M337.5 468.6l0.5 4.3M345 469.7l0.5 4.3M352.7 470.8l0.5 4.3M360.3 471.9l0.5 4.3M368.1 473l0.5 4.3M375.9 474.1l0.5 4.3M383.8 475.2l0.5 4.3M391.7 476.4l0.5 4.3M399.7 477.5l0.5 4.3M407.8 478.7l0.5 4.3M416 479.8l0.5 4.3M424.2 481l0.5 4.3M432.5 482.2l0.5 4.3M440.9 483.4l0.5 4.3M449.3 484.6l0.5 4.3M457.8 485.8l0.5 4.3M466.4 487.1l0.5 4.3M475.1 488.3l0.5 4.3M483.8 489.6l0.5 4.3M492.6 490.8l0.5 4.3M501.5 492.1l0.5 4.3M510.5 493.4l0.5 4.3M519.5 494.7l0.5 4.3M528.7 496l0.5 4.3M537.9 497.3l0.5 4.3M547.1 498.7l0.5 4.3"/>
<path d="M576.6 415.3l3 -0.3M576.3 416.5l3 -0.3M576.1 417.7l3 -0.3M575.8 418.9l3 -0.3M575.5 420.2l3 -0.3M575.2 421.5l3 -0.3M574.8 422.9l3 -0.3M574.5 424.2l3 -0.3M574.2 425.7l3 -0.3M573.8 427.1l3 -0.3M573.5 428.6l3 -0.3M573.1 430.2l3 -0.3M572.7 431.7l3 -0.3M572.3 433.4l3 -0.3M571.9 435l3 -0.3M571.5 436.7l3 -0.3M571.1 438.5l3 -0.3M570.7 440.3l3 -0.3M570.2 442.2l3 -0.3M569.8 444.1l3 -0.3M569.3 446.1l3 -0.3M568.8 448.1l3 -0.3M568.3 450.2l3 -0.3M567.8 452.3l3 -0.3M567.3 454.5l3 -0.3M566.8 456.7l3 -0.3M566.2 459l3 -0.3M565.6 461.4l3 -0.3M565.1 463.9l3 -0.3M564.5 466.4l3 -0.3M563.8 469l3 -0.3M563.2 471.6l3 -0.3M562.6 474.4l3 -0.3M561.9 477.2l3 -0.3M561.2 480l3 -0.3M560.5 483l3 -0.3" stroke-width="1.05" stroke="#1a1a1a"/>
</g>
<g font-family="Liberation Sans, sans-serif" font-size="10.4" fill="#222" text-anchor="end" letter-spacing="-0.05">
<text x="308.1" y="246.6">2,800</text>
<text x="308.9" y="259.5">2,600</text>
<text x="309.7" y="272.3">2,400</text>
<text x="310.5" y="284.9">2,200</text>
<text x="311.3" y="297.5">2,000</text>
<text x="312" y="309.9">1,800</text>
<text x="312.8" y="322.2">1,600</text>
<text x="313.5" y="334.4">1,400</text>
<text x="314.3" y="346.4">1,200</text>
<text x="315" y="358.4">1,000</text>
<text x="315.8" y="370.2">800</text>
<text x="316.5" y="381.9">600</text>
<text x="317.2" y="393.5">400</text>
<text x="317.9" y="404.9">200</text>
<text x="318.6" y="416.3">0</text>
<text x="319.3" y="427.5">-200</text>
<text x="320" y="438.6">-400</text>
<text x="320.7" y="449.6">-600</text>
<text x="321.3" y="460.4">-800</text>
</g>
<g font-family="Liberation Sans, sans-serif" font-size="9.3" fill="#222" letter-spacing="-0.1">
<text x="591.4" y="241.6">2,800</text>
<text x="591.1" y="251.8">2,600</text>
<text x="590.7" y="261.8">2,400</text>
<text x="590.3" y="271.8">2,200</text>
<text x="590" y="281.7">2,000</text>
<text x="589.6" y="291.5">1,800</text>
<text x="589.3" y="301.2">1,600</text>
<text x="588.9" y="310.8">1,400</text>
<text x="588.5" y="320.3">1,200</text>
<text x="588.2" y="329.8">1,000</text>
<text x="587.9" y="339.1">800</text>
<text x="587.5" y="348.4">600</text>
<text x="587.2" y="357.6">400</text>
<text x="586.8" y="366.7">200</text>
<text x="586.5" y="375.7">0</text>
<text x="586.2" y="384.6">-200</text>
<text x="585.9" y="393.4">-400</text>
<text x="585.5" y="402.2">-600</text>
<text x="585.2" y="410.8">-800</text>
</g>
<g font-family="Liberation Sans, sans-serif" font-size="9" fill="#222" letter-spacing="-0.1">
<text transform="translate(425.8 229.3) rotate(-90)">6,500</text>
<text transform="translate(438.6 229.3) rotate(-90)">6,000</text>
<text transform="translate(451 229.3) rotate(-90)">5,500</text>
<text transform="translate(463.8 229.3) rotate(-90)">5,000</text>
<text transform="translate(476.7 229.3) rotate(-90)">4,500</text>
<text transform="translate(489.7 229.3) rotate(-90)">4,000</text>
<text transform="translate(503.3 229.3) rotate(-90)">3,500</text>
<text transform="translate(517.3 229.3) rotate(-90)">3,000</text>
<text transform="translate(531.4 229.3) rotate(-90)">2,500</text>
<text transform="translate(545.7 229.3) rotate(-90)">2,000</text>
<text transform="translate(560 229.3) rotate(-90)">1,500</text>
<text transform="translate(574.2 229.3) rotate(-90)">1,000</text>
</g>
<g font-family="Liberation Sans, sans-serif" fill="#1a1a1a" stroke="#1a1a1a" stroke-width="0.2">
<text transform="translate(311 209.3) rotate(90) scale(1.3 1)" font-size="7.4" textLength="15.9" lengthAdjust="spacing">10.0</text>
<text transform="translate(318.4 209.4) rotate(90) scale(1.3 1)" font-size="7.2" textLength="15.8" lengthAdjust="spacing">15.0</text>
<text transform="translate(325.1 209.4) rotate(90) scale(1.3 1)" font-size="7.0" textLength="15.7" lengthAdjust="spacing">20.0</text>
<text transform="translate(331.2 209.5) rotate(90) scale(1.3 1)" font-size="6.8" textLength="15.6" lengthAdjust="spacing">25.0</text>
<text transform="translate(337.5 209.5) rotate(90) scale(1.3 1)" font-size="6.7" textLength="15.5" lengthAdjust="spacing">30.0</text>
<text transform="translate(343.3 209.6) rotate(90) scale(1.3 1)" font-size="6.5" textLength="15.4" lengthAdjust="spacing">35.0</text>
<text transform="translate(349.4 209.6) rotate(90) scale(1.3 1)" font-size="6.3" textLength="15.3" lengthAdjust="spacing">40.0</text>
<text transform="translate(355.2 209.7) rotate(90) scale(1.3 1)" font-size="6.1" textLength="15.2" lengthAdjust="spacing">45.0</text>
<text transform="translate(360.5 209.7) rotate(90) scale(1.3 1)" font-size="5.9" textLength="15.1" lengthAdjust="spacing">50.0</text>
<text transform="translate(365.6 209.8) rotate(90) scale(1.3 1)" font-size="5.7" textLength="15.0" lengthAdjust="spacing">55.0</text>
<text transform="translate(370.7 209.8) rotate(90) scale(1.3 1)" font-size="5.6" textLength="15.0" lengthAdjust="spacing">60.0</text>
<text transform="translate(375.5 209.9) rotate(90) scale(1.3 1)" font-size="5.4" textLength="14.9" lengthAdjust="spacing">65.0</text>
<text transform="translate(379.8 209.9) rotate(90) scale(1.3 1)" font-size="5.2" textLength="14.8" lengthAdjust="spacing">70.0</text>
<text transform="translate(384.3 210) rotate(90) scale(1.3 1)" font-size="5.0" textLength="14.7" lengthAdjust="spacing">75.0</text>
<text transform="translate(388.3 210) rotate(90) scale(1.3 1)" font-size="4.8" textLength="14.6" lengthAdjust="spacing">80.0</text>
<text transform="translate(392.4 210.1) rotate(90) scale(1.3 1)" font-size="4.6" textLength="14.5" lengthAdjust="spacing">85.0</text>
<text transform="translate(396.3 210.1) rotate(90) scale(1.3 1)" font-size="4.5" textLength="14.4" lengthAdjust="spacing">90.0</text>
<text transform="translate(399.7 210.2) rotate(90) scale(1.3 1)" font-size="4.3" textLength="14.3" lengthAdjust="spacing">95.0</text>
<text transform="translate(402.9 210.2) rotate(90) scale(1.3 1)" font-size="4.1" textLength="14.2" lengthAdjust="spacing">100.0</text>
<text transform="translate(405.6 210.3) rotate(90) scale(1.3 1)" font-size="3.9" textLength="14.1" lengthAdjust="spacing">105.0</text>
</g>
<g font-family="Liberation Sans, sans-serif" fill="#222">
<text transform="translate(582.4 419.7) rotate(11) scale(1 0.5)" font-size="8.2">100.0</text>
<text transform="translate(581.6 423.7) rotate(5) scale(1 0.5)" font-size="8.4">95.0</text>
<text transform="translate(581.3 427.1) rotate(5) scale(1 0.5)" font-size="8.5">90.0</text>
<text transform="translate(580.9 430.6) rotate(5) scale(1 0.5)" font-size="8.7">85.0</text>
<text transform="translate(580.4 434.5) rotate(5) scale(1 0.5)" font-size="8.8">80.0</text>
<text transform="translate(580 438.8) rotate(5) scale(1 0.5)" font-size="9">75.0</text>
<text transform="translate(579.3 443.1) rotate(5) scale(1 0.5)" font-size="9.1">70.0</text>
<text transform="translate(578.2 447.6) rotate(5) scale(1 0.5)" font-size="9.3">65.0</text>
<text transform="translate(577.2 452) rotate(5) scale(1 0.5)" font-size="9.5">60.0</text>
<text transform="translate(576.4 456.6) rotate(5) scale(1 0.5)" font-size="9.6">55.0</text>
<text transform="translate(575.3 461.1) rotate(5) scale(1 0.5)" font-size="9.8">50.0</text>
<text transform="translate(574 465.9) rotate(5) scale(1 0.5)" font-size="9.9">45.0</text>
<text transform="translate(573.3 470.9) rotate(5) scale(1 0.5)" font-size="10.1">40.0</text>
<text transform="translate(572.2 475.8) rotate(5) scale(1 0.5)" font-size="10.2">35.0</text>
<text transform="translate(571.4 480.5) rotate(5) scale(1 0.5)" font-size="10.4">30.0</text>
</g>
<text x="494.5" y="190" font-family="Liberation Sans, sans-serif" font-size="10.8" fill="#222" text-anchor="middle" letter-spacing="-0.1">Engine Speed (rpm)</text>
<defs><clipPath id="cpa"><rect x="262" y="172.4" width="400" height="307"/></clipPath></defs>
<g clip-path="url(#cpa)">
<text transform="translate(349.3 182.2) skewY(11.5) scale(0.56 1)" font-family="Liberation Sans, sans-serif" font-size="14" fill="#222" text-anchor="end">Manifold</text>
<text transform="translate(350 182.3) skewY(11.5) scale(0.415 1)" font-family="Liberation Sans, sans-serif" font-size="12.6" fill="#222">Absolute Pressure (kPa)</text>
<text transform="translate(630 459.3) rotate(-88)" font-family="Liberation Sans, sans-serif" font-size="11.6" fill="#222" text-anchor="end" textLength="38" lengthAdjust="spacingAndGlyphs">Manifold Absolute</text>
<text transform="translate(630.3 458) rotate(-88)" font-family="Liberation Sans, sans-serif" font-size="10" fill="#222" textLength="22" lengthAdjust="spacingAndGlyphs">Pressure</text>
<text transform="translate(630.6 434) rotate(-88)" font-family="Liberation Sans, sans-serif" font-size="8.2" fill="#222" textLength="11.8" lengthAdjust="spacingAndGlyphs">(kPa)</text>
</g>
</g>
<rect x="827.5" y="296.6" width="19.8" height="12.3" fill="#ffb400"/>
<rect x="827.5" y="308.6" width="19.8" height="12.3" fill="#ffc800"/>
<rect x="827.5" y="320.6" width="19.8" height="12.3" fill="#ffdc00"/>
<rect x="827.5" y="332.6" width="19.8" height="12.3" fill="#fff000"/>
<rect x="827.5" y="344.6" width="19.8" height="12.3" fill="#f0ff00"/>
<rect x="827.5" y="356.5" width="19.8" height="12.3" fill="#b4ff00"/>
<rect x="827.5" y="368.5" width="19.8" height="12.3" fill="#78ff00"/>
<rect x="827.5" y="380.5" width="19.8" height="12.3" fill="#3cff00"/>
<rect x="827.5" y="392.5" width="19.8" height="12.3" fill="#00ff1e"/>
<g font-family="Liberation Sans, sans-serif" font-size="8" fill="#111" text-anchor="middle" letter-spacing="-0.1">
<text x="865" y="299.5">2825.065</text>
<text x="865" y="311.5">2402.107</text>
<text x="865" y="323.5">1979.149</text>
<text x="865" y="335.5">1556.19</text>
<text x="865" y="347.5">1133.232</text>
<text x="865" y="359.4">710.274</text>
<text x="865" y="371.4">287.316</text>
<text x="865" y="383.4">-135.642</text>
<text x="865" y="395.4">-558.6</text>
<text x="865" y="407.4">-981.558</text>
</g>
</svg>
<!--TASKBAR-->
<div id="taskbar" class="abs"><div id="search" class="abs"></div><svg style="left:0;top:0" width="900" height="27" viewBox="0 479.6 900 27">
<!-- start -->
<g fill="#fff"><path d="M10.6 489.5l4.6-0.7v4.3h-4.6zM15.9 488.7l5.5-0.8v5.2h-5.5zM10.6 493.8h4.6v4.3l-4.6-0.7zM15.9 493.8h5.5v5.2l-5.5-0.8z"/></g>
<!-- search icon -->
<circle cx="47.3" cy="491.3" r="3" fill="none" stroke="#e8e8e8" stroke-width="0.9"/><path d="M45.1 493.6l-3 3.3" stroke="#e8e8e8" stroke-width="0.9"/>
<text x="58.3" y="496.7" font-family="Liberation Sans, sans-serif" font-size="9.9" fill="#e9e9e9" textLength="84.2" lengthAdjust="spacingAndGlyphs">Type here to search</text>
<!-- chrome -->
<g><circle cx="239.2" cy="492.7" r="7.7" fill="#db4437"/><path d="M239.2 492.7l-6.7 3.85a7.7 7.7 0 0 0 6.7 3.85a7.7 7.7 0 0 0 3.3-0.75z" fill="#0f9d58"/><path d="M239.2 492.7l3.3 6.95a7.7 7.7 0 0 0 4.4-6.95a7.7 7.7 0 0 0 -1.03-3.85h-6.67z" fill="#ffcd40"/><path d="M232.5 496.55l3.6-5.5l3.1 1.65z" fill="#0f9d58"/><circle cx="239.2" cy="492.7" r="3.5" fill="#f1f1f1"/><circle cx="239.2" cy="492.7" r="2.8" fill="#4285f4"/></g>
<!-- dmm -->
<rect x="263.5" y="490.3" width="16.3" height="4.3" fill="#2f3aa8"/><path d="M265 492.5h13" stroke="#d8dcff" stroke-width="1.7" stroke-dasharray="2.6 0.9"/>
<!-- folder -->
<g><path d="M296.8 487h5l1.2 1.4h7.8v10.6h-14z" fill="#f6c64a"/><path d="M296.8 490h14v9h-14z" fill="#ffd969"/><rect x="300" y="494.5" width="7.5" height="4.5" fill="#3a93dd"/><rect x="302" y="496.5" width="3.5" height="2.5" fill="#ffd969"/></g>
<!-- red square -->
<rect x="328" y="485" width="15.5" height="15" fill="#e83a36"/><path d="M332.3 492.5l2.6-2.6l2.6 2.6l-2.6 2.6z" fill="#fff"/><path d="M336.5 492.5l2.4-2.4l2.4 2.4l-2.4 2.4z" fill="none" stroke="#fff" stroke-width="0.9"/>
<!-- lightning -->
<path d="M369.5 485.3l6.5-0.3l-3.3 4.2l3.8-0.2l-9 10.5l2.8-6.6l-3.3 0.2l3.9-5z" fill="#f6c12c"/>
<!-- active wrench -->
<rect x="385.2" y="479.5" width="32.6" height="26.5" fill="#4d4d4d"/><rect x="385.2" y="504.3" width="32.6" height="1.7" fill="#8fc6ee"/>
<path d="M394.3 498.8l6.9-6.9a3.7 3.7 0 0 1 4.8-4.8l-2.3 2.3l1.3 1.3l2.3-2.3a3.7 3.7 0 0 1 -4.8 4.8l-6.9 6.9a0.9 0.9 0 0 1 -1.3-1.3z" fill="#dcdcdc"/>
<!-- obs -->
<rect x="420" y="504.3" width="27" height="1.7" fill="#8fc6ee"/>
<circle cx="432.8" cy="492.5" r="7.3" fill="#1c1c1c" stroke="#d6d6d6" stroke-width="1.2"/><g fill="none" stroke="#d6d6d6" stroke-width="1.1"><path d="M432.8 486.5a3.3 3.3 0 0 1 2.9 4.9"/><path d="M438 495.5a3.3 3.3 0 0 1 -5.7 0"/><path d="M427.6 495.3a3.3 3.3 0 0 1 2.8-4.9"/></g>
<!-- tray -->
<path d="M748 494.6l4-4l4 4" fill="none" stroke="#e6e6e6" stroke-width="0.9"/>
<g><rect x="765.3" y="487.3" width="4.2" height="7.6" rx="2.1" fill="#e6e6e6"/><path d="M763.8 492.8a3.6 3.6 0 0 0 7.2 0M767.4 496.4v1.8M765.4 498.2h4" fill="none" stroke="#e6e6e6" stroke-width="0.8"/></g>
<g><rect x="780.5" y="490.3" width="8" height="4.8" fill="none" stroke="#e6e6e6" stroke-width="0.8"/><rect x="781.5" y="491.3" width="4.5" height="2.8" fill="#e6e6e6"/><path d="M789 491.7v2M778.3 489.5v3.2h1.6M777.5 489.5h1.6" stroke="#e6e6e6" stroke-width="0.8" fill="none"/></g>
<g fill="none" stroke="#e6e6e6" stroke-width="0.9"><path d="M796.3 497.6a7.5 7.5 0 0 1 7.5-7.5" opacity="0.7"/><path d="M798.3 497.6a5.5 5.5 0 0 1 5.5-5.5"/><path d="M800.5 497.6a3.3 3.3 0 0 1 3.3-3.3"/></g><circle cx="803.3" cy="497.1" r="0.9" fill="#e6e6e6"/>
<g fill="none" stroke="#e6e6e6" stroke-width="0.8"><path d="M810 491.3h2.2l2.8-2.6v8.6l-2.8-2.6h-2.2z"/><path d="M816.5 490.8a3 3 0 0 1 0 4.4M818 489.3a5 5 0 0 1 0 7.4M819.6 488a7 7 0 0 1 0 10"/></g>
<g font-family="Liberation Sans, sans-serif" fill="#f0f0f0" font-size="8.3"><text x="830.6" y="489.6" textLength="27.4" lengthAdjust="spacingAndGlyphs">3:41 PM</text><text x="826.6" y="501.5" textLength="34.4" lengthAdjust="spacingAndGlyphs">9/21/2023</text></g>
<path d="M873.3 488.3h10.6v7.4h-4l-1.8 1.9l-1.6-1.9h-3.2z" fill="none" stroke="#e6e6e6" stroke-width="0.8"/>
<path d="M897.3 479.5v26.5" stroke="#8a8a8a" stroke-width="0.6"/>
</svg>
</div>
</div>
</body></html>
